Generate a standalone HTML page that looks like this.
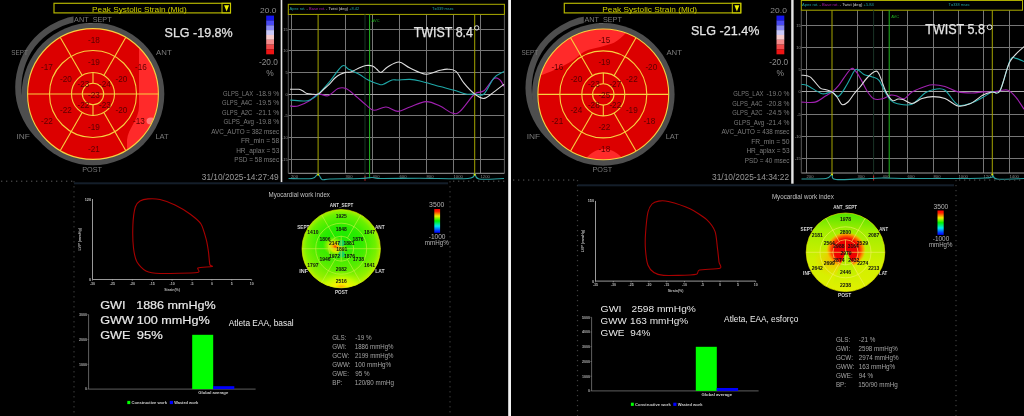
<!DOCTYPE html><html><head><meta charset="utf-8"><style>html,body{margin:0;padding:0;background:#000;width:1024px;height:416px;overflow:hidden}svg{display:block;will-change:transform}</style></head><body>
<svg width="1024" height="416" viewBox="0 0 1024 416" font-family="Liberation Sans, sans-serif">
<rect width="1024" height="416" fill="#000"/>
<rect x="54.0" y="3.3" width="176.5" height="9.6" fill="#000" stroke="#b4b400" stroke-width="1.2"/>
<rect x="222.0" y="3.3" width="8.5" height="9.6" fill="none" stroke="#c8c800" stroke-width="1"/>
<path d="M224.1,5.2 L229.1,5.2 L226.6,11.6Z" fill="#f0f000"/>
<text x="92.04" y="12.40" font-size="8.00" fill="#d0d000" font-weight="normal" textLength="94.68" lengthAdjust="spacingAndGlyphs" >Peak Systolic Strain (Mid)</text>
<path d="M101.63,19.61 A68.90,68.90 0 0 0 63.73,151.74" fill="none" stroke="#4e4e4e" stroke-width="6.20"/>
<circle cx="93.0" cy="94.0" r="71.3" fill="#4e4e4e"/>
<clipPath id="disc0"><circle cx="93.0" cy="94.0" r="65.4"/></clipPath>
<circle cx="93.0" cy="94.0" r="65.4" fill="#dc0000"/>
<g clip-path="url(#disc0)"><path d="M139,20 L139,106 C139,120 128,128 127,140 L127,170 L170,170 L170,20Z" fill="#ff2a2a"/><ellipse cx="151" cy="121" rx="4.5" ry="3.5" fill="#ff9a9a" opacity="0.75"/></g>
<circle cx="93.0" cy="94.0" r="65.4" fill="none" stroke="#f8d040" stroke-width="1.1"/>
<circle cx="93.0" cy="94.0" r="43.5" fill="none" stroke="#f8d040" stroke-width="1.1"/>
<circle cx="93.0" cy="94.0" r="21.5" fill="none" stroke="#f8d040" stroke-width="1.1"/>
<circle cx="93.0" cy="94.0" r="10.7" fill="none" stroke="#f8d040" stroke-width="1.1"/>
<line x1="27.6" y1="94.0" x2="158.4" y2="94.0" stroke="#f8d040" stroke-width="1.1"/>
<line x1="103.8" y1="75.4" x2="125.7" y2="37.4" stroke="#f8d040" stroke-width="1.1"/>
<line x1="82.2" y1="75.4" x2="60.3" y2="37.4" stroke="#f8d040" stroke-width="1.1"/>
<line x1="82.2" y1="112.6" x2="60.3" y2="150.6" stroke="#f8d040" stroke-width="1.1"/>
<line x1="103.8" y1="112.6" x2="125.7" y2="150.6" stroke="#f8d040" stroke-width="1.1"/>
<line x1="93.0" y1="72.5" x2="93.0" y2="83.3" stroke="#f8d040" stroke-width="1.1"/>
<line x1="93.0" y1="104.7" x2="93.0" y2="115.5" stroke="#f8d040" stroke-width="1.1"/>
<text x="94.0" y="43.0" font-size="8.20" fill="#5a0000" text-anchor="middle" font-weight="normal" >-18</text>
<text x="141.0" y="70.0" font-size="8.20" fill="#5a0000" text-anchor="middle" font-weight="normal" >-16</text>
<text x="139.0" y="124.0" font-size="8.20" fill="#5a0000" text-anchor="middle" font-weight="normal" >-13</text>
<text x="94.0" y="152.0" font-size="8.20" fill="#5a0000" text-anchor="middle" font-weight="normal" >-21</text>
<text x="47.0" y="124.0" font-size="8.20" fill="#5a0000" text-anchor="middle" font-weight="normal" >-22</text>
<text x="47.0" y="70.0" font-size="8.20" fill="#5a0000" text-anchor="middle" font-weight="normal" >-17</text>
<text x="94.0" y="65.0" font-size="8.20" fill="#5a0000" text-anchor="middle" font-weight="normal" >-19</text>
<text x="121.5" y="81.5" font-size="8.20" fill="#5a0000" text-anchor="middle" font-weight="normal" >-20</text>
<text x="121.5" y="113.0" font-size="8.20" fill="#5a0000" text-anchor="middle" font-weight="normal" >-20</text>
<text x="94.0" y="130.0" font-size="8.20" fill="#5a0000" text-anchor="middle" font-weight="normal" >-19</text>
<text x="66.0" y="113.0" font-size="8.20" fill="#5a0000" text-anchor="middle" font-weight="normal" >-22</text>
<text x="66.0" y="81.5" font-size="8.20" fill="#5a0000" text-anchor="middle" font-weight="normal" >-20</text>
<text x="83.5" y="86.5" font-size="8.20" fill="#5a0000" text-anchor="middle" font-weight="normal" >-23</text>
<text x="105.0" y="86.5" font-size="8.20" fill="#5a0000" text-anchor="middle" font-weight="normal" >-24</text>
<text x="105.0" y="108.0" font-size="8.20" fill="#5a0000" text-anchor="middle" font-weight="normal" >-23</text>
<text x="83.5" y="108.0" font-size="8.20" fill="#5a0000" text-anchor="middle" font-weight="normal" >-22</text>
<text x="94.0" y="97.5" font-size="8.20" fill="#5a0000" text-anchor="middle" font-weight="normal" >-23</text>
<rect x="73.5" y="15.2" width="38.5" height="7.6" fill="#000"/>
<text x="74.10" y="22.20" font-size="7.90" fill="#7a7a7a" font-weight="normal" textLength="37.47" lengthAdjust="spacingAndGlyphs" >ANT_SEPT</text>
<text x="11.31" y="55.30" font-size="7.90" fill="#7a7a7a" font-weight="normal" textLength="16.63" lengthAdjust="spacingAndGlyphs" >SEPT</text>
<text x="156.10" y="55.40" font-size="7.90" fill="#7a7a7a" font-weight="normal" textLength="15.56" lengthAdjust="spacingAndGlyphs" >ANT</text>
<text x="16.45" y="138.80" font-size="7.90" fill="#7a7a7a" font-weight="normal" textLength="13.39" lengthAdjust="spacingAndGlyphs" >INF</text>
<text x="155.40" y="138.90" font-size="7.90" fill="#7a7a7a" font-weight="normal" textLength="13.25" lengthAdjust="spacingAndGlyphs" >LAT</text>
<text x="82.22" y="171.90" font-size="7.90" fill="#7a7a7a" font-weight="normal" textLength="19.75" lengthAdjust="spacingAndGlyphs" >POST</text>
<text x="164.54" y="36.80" font-size="13.70" fill="#e4e4e4" font-weight="normal" textLength="68.17" lengthAdjust="spacingAndGlyphs" stroke="#e4e4e4" stroke-width="0.25">SLG -19.8%</text>
<text x="260.08" y="12.50" font-size="7.50" fill="#8c8c8c" font-weight="normal" textLength="16.48" lengthAdjust="spacingAndGlyphs" >20.0</text>
<rect x="266.2" y="15.60" width="7.8" height="4.90" fill="#1414f0"/>
<rect x="266.2" y="20.43" width="7.8" height="4.90" fill="#4a4af2"/>
<rect x="266.2" y="25.26" width="7.8" height="4.90" fill="#8a8af4"/>
<rect x="266.2" y="30.09" width="7.8" height="4.90" fill="#c8c8f8"/>
<rect x="266.2" y="34.92" width="7.8" height="4.90" fill="#f8cccc"/>
<rect x="266.2" y="39.75" width="7.8" height="4.90" fill="#f48a8a"/>
<rect x="266.2" y="44.58" width="7.8" height="4.90" fill="#f04a4a"/>
<rect x="266.2" y="49.41" width="7.8" height="4.90" fill="#ee1414"/>
<text x="258.93" y="64.90" font-size="9.00" fill="#8c8c8c" font-weight="normal" textLength="18.96" lengthAdjust="spacingAndGlyphs" >-20.0</text>
<text x="266.31" y="75.90" font-size="8.50" fill="#8c8c8c" font-weight="normal" textLength="7.48" lengthAdjust="spacingAndGlyphs" >%</text>
<text x="223.00" y="95.60" font-size="7.00" fill="#7a7a7a" font-weight="normal" textLength="30.24" lengthAdjust="spacingAndGlyphs" >GLPS_LAX</text>
<text x="256.20" y="95.60" font-size="7.00" fill="#7a7a7a" font-weight="normal" textLength="23.04" lengthAdjust="spacingAndGlyphs" >-18.9 %</text>
<text x="222.01" y="105.13" font-size="7.00" fill="#7a7a7a" font-weight="normal" textLength="30.33" lengthAdjust="spacingAndGlyphs" >GLPS_A4C</text>
<text x="256.20" y="105.13" font-size="7.00" fill="#7a7a7a" font-weight="normal" textLength="23.04" lengthAdjust="spacingAndGlyphs" >-19.5 %</text>
<text x="222.01" y="114.66" font-size="7.00" fill="#7a7a7a" font-weight="normal" textLength="30.33" lengthAdjust="spacingAndGlyphs" >GLPS_A2C</text>
<text x="256.20" y="114.66" font-size="7.00" fill="#7a7a7a" font-weight="normal" textLength="23.04" lengthAdjust="spacingAndGlyphs" >-21.1 %</text>
<text x="223.49" y="124.19" font-size="7.00" fill="#7a7a7a" font-weight="normal" textLength="30.51" lengthAdjust="spacingAndGlyphs" >GLPS_Avg</text>
<text x="256.20" y="124.19" font-size="7.00" fill="#7a7a7a" font-weight="normal" textLength="23.04" lengthAdjust="spacingAndGlyphs" >-19.8 %</text>
<text x="211.20" y="133.72" font-size="7.00" fill="#7a7a7a" font-weight="normal" textLength="67.95" lengthAdjust="spacingAndGlyphs" >AVC_AUTO = 382 msec</text>
<text x="240.97" y="143.25" font-size="7.00" fill="#7a7a7a" font-weight="normal" textLength="38.32" lengthAdjust="spacingAndGlyphs" >FR_min = 58</text>
<text x="236.18" y="152.78" font-size="7.00" fill="#7a7a7a" font-weight="normal" textLength="43.10" lengthAdjust="spacingAndGlyphs" >HR_aplax = 53</text>
<text x="234.29" y="162.31" font-size="7.00" fill="#7a7a7a" font-weight="normal" textLength="44.88" lengthAdjust="spacingAndGlyphs" >PSD = 58 msec</text>
<text x="201.77" y="179.90" font-size="9.00" fill="#989898" font-weight="normal" textLength="76.91" lengthAdjust="spacingAndGlyphs" >31/10/2025-14:27:49</text>
<rect x="280.7" y="0" width="1.6" height="182.3" fill="#e4e4e4"/>
<rect x="291" y="14.4" width="1" height="158.9" fill="#767676"/>
<rect x="345" y="14.4" width="1" height="158.9" fill="#767676"/>
<rect x="372" y="14.4" width="1" height="158.9" fill="#767676"/>
<rect x="399" y="14.4" width="1" height="158.9" fill="#767676"/>
<rect x="426" y="14.4" width="1" height="158.9" fill="#767676"/>
<rect x="453" y="14.4" width="1" height="158.9" fill="#767676"/>
<rect x="480" y="14.4" width="1" height="158.9" fill="#767676"/>
<rect x="288.3" y="29" width="216.1" height="1" fill="#767676"/>
<rect x="288.3" y="50" width="216.1" height="1" fill="#767676"/>
<rect x="288.3" y="72" width="216.1" height="1" fill="#767676"/>
<rect x="288.3" y="94" width="216.1" height="1" fill="#767676"/>
<rect x="288.3" y="115" width="216.1" height="1" fill="#767676"/>
<rect x="288.3" y="137" width="216.1" height="1" fill="#767676"/>
<rect x="288.3" y="159" width="216.1" height="1" fill="#767676"/>
<rect x="288.3" y="172.8" width="216.1" height="1" fill="#a0a0a0"/>
<rect x="288.3" y="94" width="216.1" height="1" fill="#a8a8a8"/>
<rect x="287.8" y="14.4" width="1" height="158.9" fill="#5a5a5a"/>
<rect x="503.9" y="14.4" width="1" height="158.9" fill="#5a5a5a"/>
<rect x="288.3" y="4.3" width="216.1" height="10.1" fill="#000" stroke="#acac00" stroke-width="1"/>
<text x="289.50" y="9.80" font-size="4.3" textLength="69.71" lengthAdjust="spacingAndGlyphs" font-family="Liberation Sans, sans-serif"><tspan fill="#20a0a0">Apex rot.</tspan><tspan fill="#808080"> - </tspan><tspan fill="#b020b0">Base rot.</tspan><tspan fill="#808080"> - </tspan><tspan fill="#d0d0d0">Twist (deg)</tspan><tspan fill="#20a0a0"> +8.42</tspan></text>
<text x="432.12" y="9.80" font-size="4.30" fill="#20a0a0" font-weight="normal" textLength="21.68" lengthAdjust="spacingAndGlyphs" >T=339 msec</text>
<rect x="364.5" y="14.4" width="1" height="163.9" fill="#1a3326"/>
<rect x="369.1" y="14.4" width="1" height="163.9" fill="#20b420"/>
<text x="371.6" y="22.4" font-size="4.00" fill="#20b020" text-anchor="start" font-weight="normal" >AVC</text>
<rect x="364.5" y="175.8" width="1" height="5" fill="#c02828"/>
<rect x="317.6" y="14.4" width="1" height="160.4" fill="#a4a400"/>
<rect x="474.2" y="14.4" width="1" height="160.4" fill="#a4a400"/>
<text x="287.8" y="30.5" font-size="4.00" fill="#909090" text-anchor="end" font-weight="normal" >15</text>
<text x="287.8" y="52.0" font-size="4.00" fill="#909090" text-anchor="end" font-weight="normal" >10</text>
<text x="287.8" y="74.0" font-size="4.00" fill="#909090" text-anchor="end" font-weight="normal" >5</text>
<text x="287.8" y="95.5" font-size="4.00" fill="#909090" text-anchor="end" font-weight="normal" >0</text>
<text x="287.8" y="117.0" font-size="4.00" fill="#909090" text-anchor="end" font-weight="normal" >-5</text>
<text x="287.8" y="139.0" font-size="4.00" fill="#909090" text-anchor="end" font-weight="normal" >-10</text>
<text x="287.8" y="160.5" font-size="4.00" fill="#909090" text-anchor="end" font-weight="normal" >-15</text>
<text x="291.0" y="177.9" font-size="4.20" fill="#8c8c8c" text-anchor="start" font-weight="normal" >200</text>
<text x="345.5" y="177.9" font-size="4.20" fill="#8c8c8c" text-anchor="start" font-weight="normal" >300</text>
<text x="372.5" y="177.9" font-size="4.20" fill="#8c8c8c" text-anchor="start" font-weight="normal" >400</text>
<text x="399.5" y="177.9" font-size="4.20" fill="#8c8c8c" text-anchor="start" font-weight="normal" >600</text>
<text x="426.5" y="177.9" font-size="4.20" fill="#8c8c8c" text-anchor="start" font-weight="normal" >800</text>
<text x="453.5" y="177.9" font-size="4.20" fill="#8c8c8c" text-anchor="start" font-weight="normal" >1000</text>
<text x="480.5" y="177.9" font-size="4.20" fill="#8c8c8c" text-anchor="start" font-weight="normal" >1200</text>
<path d="M290.0,106.0 C291.3,106.0 294.7,106.9 298.0,106.0 C301.3,105.1 306.7,102.5 310.0,100.5 C313.3,98.5 315.0,94.8 318.0,94.0 C321.0,93.2 324.7,96.7 328.0,95.8 C331.3,94.9 335.0,89.8 338.0,88.6 C341.0,87.4 343.0,87.3 346.0,88.6 C349.0,89.9 352.7,93.5 356.0,96.2 C359.3,98.9 363.0,102.6 366.0,104.9 C369.0,107.2 370.7,110.0 374.0,110.3 C377.3,110.6 382.0,106.8 386.0,107.0 C390.0,107.2 394.0,111.4 398.0,111.4 C402.0,111.4 405.3,108.6 410.0,107.0 C414.7,105.4 421.0,101.8 426.0,101.6 C431.0,101.4 435.7,104.1 440.0,106.0 C444.3,107.9 448.7,112.1 452.0,113.0 C455.3,113.9 456.2,114.6 460.0,111.4 C463.8,108.2 470.6,97.4 474.6,94.0 C478.6,90.6 480.8,93.4 484.0,90.8 C487.2,88.2 491.3,80.3 494.0,78.5 C496.7,76.7 498.3,78.7 500.0,80.0 C501.7,81.3 503.3,85.4 504.0,86.5" fill="none" stroke="#a020b0" stroke-width="1.1"/>
<path d="M290.3,100.1 C292.5,100.2 300.1,101.0 303.3,101.0 C306.6,101.0 307.3,101.3 309.8,100.1 C312.3,98.9 315.2,97.0 318.4,94.0 C321.6,91.0 325.2,86.9 329.2,82.2 C333.2,77.5 338.9,68.2 342.2,66.0 C345.4,63.8 345.8,67.8 348.7,69.2 C351.6,70.6 356.2,72.8 359.5,74.6 C362.8,76.4 364.9,78.4 368.2,80.0 C371.4,81.6 376.5,83.6 379.0,84.3 C381.5,85.0 381.1,85.0 383.3,84.3 C385.5,83.6 389.6,80.7 392.0,80.0 C394.4,79.3 395.0,80.1 398.0,80.0 C401.0,79.9 406.3,79.2 410.0,79.4 C413.7,79.6 415.0,79.8 420.0,81.0 C425.0,82.2 434.0,84.9 440.0,86.5 C446.0,88.1 451.7,89.5 456.0,90.8 C460.3,92.0 462.9,93.5 466.0,94.0 C469.1,94.5 471.6,94.0 474.6,94.0 C477.6,94.0 480.8,96.7 484.0,94.0 C487.2,91.3 490.7,81.6 494.0,77.8 C497.3,74.0 502.3,72.5 504.0,71.4" fill="none" stroke="#1ea8a8" stroke-width="1.1"/>
<path d="M290.0,89.3 C291.5,89.3 296.8,89.0 299.0,89.3 C301.2,89.6 301.7,90.3 303.0,91.0 C304.3,91.7 305.5,93.1 307.0,93.6 C308.5,94.1 310.1,94.1 312.0,94.2 C313.9,94.3 316.4,94.9 318.4,94.0 C320.4,93.1 322.2,90.6 324.0,89.0 C325.8,87.4 327.4,86.1 329.2,84.3 C331.0,82.5 333.2,79.6 335.0,78.0 C336.8,76.4 338.2,75.5 340.0,74.6 C341.8,73.7 343.7,72.8 345.5,72.4 C347.3,72.0 348.6,72.8 350.9,72.0 C353.2,71.2 357.0,68.8 359.5,67.7 C362.0,66.6 363.8,65.8 366.0,65.5 C368.2,65.2 370.7,65.4 372.5,66.0 C374.3,66.6 375.4,68.1 376.8,69.2 C378.2,70.3 379.3,72.8 381.1,72.4 C382.9,72.0 384.6,68.7 387.6,67.0 C390.6,65.3 395.3,61.8 399.0,62.0 C402.7,62.2 405.5,66.0 410.0,68.0 C414.5,70.0 421.0,73.8 426.0,74.2 C431.0,74.6 436.3,71.1 440.0,70.3 C443.7,69.5 445.3,69.0 448.0,69.2 C450.7,69.4 453.3,69.1 456.0,71.4 C458.7,73.7 460.9,79.4 464.0,83.2 C467.1,87.0 471.3,91.5 474.6,94.0 C477.9,96.5 480.8,98.8 484.0,98.4 C487.2,98.1 490.7,94.2 494.0,91.9 C497.3,89.6 502.3,85.6 504.0,84.3" fill="none" stroke="#dedede" stroke-width="1.1"/>
<path d="M288.5,178.5 C292.4,178.5 307.1,179.2 312.0,178.5 C316.9,177.8 316.3,173.8 318.0,174.0 C319.7,174.2 320.0,178.7 322.0,179.5 C324.0,180.3 323.7,179.2 330.0,179.0 C336.3,178.8 353.0,178.8 360.0,178.5 C367.0,178.2 368.7,177.5 372.0,177.5 C375.3,177.5 372.0,178.4 380.0,178.5 C388.0,178.6 405.3,178.3 420.0,178.3 C434.7,178.3 458.9,179.2 468.0,178.5 C477.1,177.8 472.9,173.9 474.7,174.0 C476.5,174.1 474.1,178.2 479.0,179.0 C483.9,179.8 499.8,178.6 504.0,178.5" fill="none" stroke="#2aa0a0" stroke-width="1.1"/>
<circle cx="318.1" cy="174.8" r="1" fill="#e0e000"/>
<circle cx="474.7" cy="174.8" r="1" fill="#e0e000"/>
<text x="413.75" y="36.50" font-size="14.00" fill="#e4e4e4" font-weight="normal" textLength="59.23" lengthAdjust="spacingAndGlyphs" stroke="#e4e4e4" stroke-width="0.25">TWIST 8.4</text>
<circle cx="476.7" cy="27.9" r="2.2" fill="none" stroke="#e4e4e4" stroke-width="1"/>
<rect x="564.3" y="3.3" width="176.5" height="9.6" fill="#000" stroke="#b4b400" stroke-width="1.2"/>
<rect x="732.3" y="3.3" width="8.5" height="9.6" fill="none" stroke="#c8c800" stroke-width="1"/>
<path d="M734.4,5.2 L739.4,5.2 L736.9,11.6Z" fill="#f0f000"/>
<text x="602.34" y="12.40" font-size="8.00" fill="#d0d000" font-weight="normal" textLength="94.68" lengthAdjust="spacingAndGlyphs" >Peak Systolic Strain (Mid)</text>
<path d="M611.93,20.01 A68.90,68.90 0 0 0 574.03,152.14" fill="none" stroke="#4e4e4e" stroke-width="6.20"/>
<circle cx="603.3" cy="94.4" r="71.3" fill="#4e4e4e"/>
<clipPath id="disc510"><circle cx="603.3" cy="94.4" r="65.4"/></clipPath>
<circle cx="603.3" cy="94.4" r="65.4" fill="#dc0000"/>
<g clip-path="url(#disc510)"><path d="M530,80 L540,75.5 C548,73 562,67 572,61 C578,57 582,52 588,50 C595,48 605,46 614,42.7 C619,40 622,37 626,33 L645,15 L645,0 L520,0Z" fill="#ff2a2a"/><path d="M583,162 C590,153 596,149 604,149 C612,149 619,153 625,162Z" fill="#ff2a2a"/></g>
<circle cx="603.3" cy="94.4" r="65.4" fill="none" stroke="#f8d040" stroke-width="1.1"/>
<circle cx="603.3" cy="94.4" r="43.5" fill="none" stroke="#f8d040" stroke-width="1.1"/>
<circle cx="603.3" cy="94.4" r="21.5" fill="none" stroke="#f8d040" stroke-width="1.1"/>
<circle cx="603.3" cy="94.4" r="10.7" fill="none" stroke="#f8d040" stroke-width="1.1"/>
<line x1="537.9" y1="94.4" x2="668.7" y2="94.4" stroke="#f8d040" stroke-width="1.1"/>
<line x1="614.0" y1="75.8" x2="636.0" y2="37.8" stroke="#f8d040" stroke-width="1.1"/>
<line x1="592.5" y1="75.8" x2="570.6" y2="37.8" stroke="#f8d040" stroke-width="1.1"/>
<line x1="592.5" y1="113.0" x2="570.6" y2="151.0" stroke="#f8d040" stroke-width="1.1"/>
<line x1="614.0" y1="113.0" x2="636.0" y2="151.0" stroke="#f8d040" stroke-width="1.1"/>
<line x1="603.3" y1="72.9" x2="603.3" y2="83.7" stroke="#f8d040" stroke-width="1.1"/>
<line x1="603.3" y1="105.1" x2="603.3" y2="115.9" stroke="#f8d040" stroke-width="1.1"/>
<text x="604.3" y="43.4" font-size="8.20" fill="#5a0000" text-anchor="middle" font-weight="normal" >-15</text>
<text x="651.3" y="70.4" font-size="8.20" fill="#5a0000" text-anchor="middle" font-weight="normal" >-20</text>
<text x="649.3" y="124.4" font-size="8.20" fill="#5a0000" text-anchor="middle" font-weight="normal" >-18</text>
<text x="604.3" y="152.4" font-size="8.20" fill="#5a0000" text-anchor="middle" font-weight="normal" >-18</text>
<text x="557.3" y="124.4" font-size="8.20" fill="#5a0000" text-anchor="middle" font-weight="normal" >-21</text>
<text x="557.3" y="70.4" font-size="8.20" fill="#5a0000" text-anchor="middle" font-weight="normal" >-16</text>
<text x="604.3" y="65.4" font-size="8.20" fill="#5a0000" text-anchor="middle" font-weight="normal" >-19</text>
<text x="631.8" y="81.9" font-size="8.20" fill="#5a0000" text-anchor="middle" font-weight="normal" >-22</text>
<text x="631.8" y="113.4" font-size="8.20" fill="#5a0000" text-anchor="middle" font-weight="normal" >-19</text>
<text x="604.3" y="130.4" font-size="8.20" fill="#5a0000" text-anchor="middle" font-weight="normal" >-22</text>
<text x="576.3" y="113.4" font-size="8.20" fill="#5a0000" text-anchor="middle" font-weight="normal" >-24</text>
<text x="576.3" y="81.9" font-size="8.20" fill="#5a0000" text-anchor="middle" font-weight="normal" >-20</text>
<text x="593.8" y="86.9" font-size="8.20" fill="#5a0000" text-anchor="middle" font-weight="normal" >-23</text>
<text x="615.3" y="86.9" font-size="8.20" fill="#5a0000" text-anchor="middle" font-weight="normal" >-27</text>
<text x="615.3" y="108.4" font-size="8.20" fill="#5a0000" text-anchor="middle" font-weight="normal" >-22</text>
<text x="593.8" y="108.4" font-size="8.20" fill="#5a0000" text-anchor="middle" font-weight="normal" >-28</text>
<text x="604.3" y="97.9" font-size="8.20" fill="#5a0000" text-anchor="middle" font-weight="normal" >-25</text>
<rect x="583.8" y="15.2" width="38.5" height="7.6" fill="#000"/>
<text x="584.40" y="22.20" font-size="7.90" fill="#7a7a7a" font-weight="normal" textLength="37.47" lengthAdjust="spacingAndGlyphs" >ANT_SEPT</text>
<text x="521.61" y="55.30" font-size="7.90" fill="#7a7a7a" font-weight="normal" textLength="16.63" lengthAdjust="spacingAndGlyphs" >SEPT</text>
<text x="666.40" y="55.40" font-size="7.90" fill="#7a7a7a" font-weight="normal" textLength="15.56" lengthAdjust="spacingAndGlyphs" >ANT</text>
<text x="526.75" y="138.80" font-size="7.90" fill="#7a7a7a" font-weight="normal" textLength="13.39" lengthAdjust="spacingAndGlyphs" >INF</text>
<text x="665.70" y="138.90" font-size="7.90" fill="#7a7a7a" font-weight="normal" textLength="13.25" lengthAdjust="spacingAndGlyphs" >LAT</text>
<text x="592.52" y="171.90" font-size="7.90" fill="#7a7a7a" font-weight="normal" textLength="19.75" lengthAdjust="spacingAndGlyphs" >POST</text>
<text x="690.93" y="34.80" font-size="13.70" fill="#e4e4e4" font-weight="normal" textLength="68.47" lengthAdjust="spacingAndGlyphs" stroke="#e4e4e4" stroke-width="0.25">SLG -21.4%</text>
<text x="770.38" y="12.50" font-size="7.50" fill="#8c8c8c" font-weight="normal" textLength="16.48" lengthAdjust="spacingAndGlyphs" >20.0</text>
<rect x="776.5" y="15.60" width="7.8" height="4.90" fill="#1414f0"/>
<rect x="776.5" y="20.43" width="7.8" height="4.90" fill="#4a4af2"/>
<rect x="776.5" y="25.26" width="7.8" height="4.90" fill="#8a8af4"/>
<rect x="776.5" y="30.09" width="7.8" height="4.90" fill="#c8c8f8"/>
<rect x="776.5" y="34.92" width="7.8" height="4.90" fill="#f8cccc"/>
<rect x="776.5" y="39.75" width="7.8" height="4.90" fill="#f48a8a"/>
<rect x="776.5" y="44.58" width="7.8" height="4.90" fill="#f04a4a"/>
<rect x="776.5" y="49.41" width="7.8" height="4.90" fill="#ee1414"/>
<text x="769.23" y="64.90" font-size="9.00" fill="#8c8c8c" font-weight="normal" textLength="18.96" lengthAdjust="spacingAndGlyphs" >-20.0</text>
<text x="776.61" y="75.90" font-size="8.50" fill="#8c8c8c" font-weight="normal" textLength="7.48" lengthAdjust="spacingAndGlyphs" >%</text>
<text x="733.30" y="96.00" font-size="7.00" fill="#7a7a7a" font-weight="normal" textLength="30.24" lengthAdjust="spacingAndGlyphs" >GLPS_LAX</text>
<text x="766.50" y="96.00" font-size="7.00" fill="#7a7a7a" font-weight="normal" textLength="23.04" lengthAdjust="spacingAndGlyphs" >-19.0 %</text>
<text x="732.21" y="105.53" font-size="7.00" fill="#7a7a7a" font-weight="normal" textLength="30.33" lengthAdjust="spacingAndGlyphs" >GLPS_A4C</text>
<text x="766.50" y="105.53" font-size="7.00" fill="#7a7a7a" font-weight="normal" textLength="23.04" lengthAdjust="spacingAndGlyphs" >-20.8 %</text>
<text x="732.21" y="115.06" font-size="7.00" fill="#7a7a7a" font-weight="normal" textLength="30.33" lengthAdjust="spacingAndGlyphs" >GLPS_A2C</text>
<text x="766.50" y="115.06" font-size="7.00" fill="#7a7a7a" font-weight="normal" textLength="23.04" lengthAdjust="spacingAndGlyphs" >-24.5 %</text>
<text x="733.79" y="124.59" font-size="7.00" fill="#7a7a7a" font-weight="normal" textLength="30.51" lengthAdjust="spacingAndGlyphs" >GLPS_Avg</text>
<text x="766.50" y="124.59" font-size="7.00" fill="#7a7a7a" font-weight="normal" textLength="23.04" lengthAdjust="spacingAndGlyphs" >-21.4 %</text>
<text x="721.60" y="134.12" font-size="7.00" fill="#7a7a7a" font-weight="normal" textLength="67.85" lengthAdjust="spacingAndGlyphs" >AVC_AUTO = 438 msec</text>
<text x="751.17" y="143.65" font-size="7.00" fill="#7a7a7a" font-weight="normal" textLength="38.38" lengthAdjust="spacingAndGlyphs" >FR_min = 50</text>
<text x="746.38" y="153.18" font-size="7.00" fill="#7a7a7a" font-weight="normal" textLength="43.20" lengthAdjust="spacingAndGlyphs" >HR_aplax = 53</text>
<text x="744.69" y="162.71" font-size="7.00" fill="#7a7a7a" font-weight="normal" textLength="44.78" lengthAdjust="spacingAndGlyphs" >PSD = 40 msec</text>
<text x="712.07" y="179.90" font-size="9.00" fill="#989898" font-weight="normal" textLength="76.96" lengthAdjust="spacingAndGlyphs" >31/10/2025-14:34:22</text>
<rect x="791.2" y="0" width="2.4" height="183.7" fill="#e4e4e4"/>
<rect x="806" y="10.2" width="1" height="162.8" fill="#767676"/>
<rect x="857" y="10.2" width="1" height="162.8" fill="#767676"/>
<rect x="882" y="10.2" width="1" height="162.8" fill="#767676"/>
<rect x="907" y="10.2" width="1" height="162.8" fill="#767676"/>
<rect x="933" y="10.2" width="1" height="162.8" fill="#767676"/>
<rect x="958" y="10.2" width="1" height="162.8" fill="#767676"/>
<rect x="983" y="10.2" width="1" height="162.8" fill="#767676"/>
<rect x="1009" y="10.2" width="1" height="162.8" fill="#767676"/>
<rect x="801.3" y="25" width="222.7" height="1" fill="#767676"/>
<rect x="801.3" y="47" width="222.7" height="1" fill="#767676"/>
<rect x="801.3" y="69" width="222.7" height="1" fill="#767676"/>
<rect x="801.3" y="91" width="222.7" height="1" fill="#767676"/>
<rect x="801.3" y="114" width="222.7" height="1" fill="#767676"/>
<rect x="801.3" y="136" width="222.7" height="1" fill="#767676"/>
<rect x="801.3" y="158" width="222.7" height="1" fill="#767676"/>
<rect x="801.3" y="172.5" width="222.7" height="1" fill="#a0a0a0"/>
<rect x="801.3" y="91" width="222.7" height="1" fill="#a8a8a8"/>
<rect x="800.8" y="10.2" width="1" height="162.8" fill="#5a5a5a"/>
<rect x="801.3" y="0.5" width="221.2" height="9.7" fill="#000" stroke="#acac00" stroke-width="1"/>
<text x="801.90" y="5.60" font-size="4.3" textLength="72.03" lengthAdjust="spacingAndGlyphs" font-family="Liberation Sans, sans-serif"><tspan fill="#20a0a0">Apex rot.</tspan><tspan fill="#808080"> - </tspan><tspan fill="#b020b0">Base rot.</tspan><tspan fill="#808080"> - </tspan><tspan fill="#d0d0d0">Twist (deg)</tspan><tspan fill="#20a0a0"> +5.84</tspan></text>
<text x="948.62" y="5.60" font-size="4.30" fill="#20a0a0" font-weight="normal" textLength="21.27" lengthAdjust="spacingAndGlyphs" >T=338 msec</text>
<rect x="873.1" y="10.2" width="1" height="167.8" fill="#1a3326"/>
<rect x="888.7" y="10.2" width="1" height="167.8" fill="#20b420"/>
<text x="891.2" y="18.2" font-size="4.00" fill="#20b020" text-anchor="start" font-weight="normal" >AVC</text>
<rect x="873.1" y="175.5" width="1" height="5" fill="#c02828"/>
<rect x="831.5" y="10.2" width="1" height="164.3" fill="#a4a400"/>
<rect x="991.8" y="10.2" width="1" height="164.3" fill="#a4a400"/>
<text x="800.8" y="27.0" font-size="4.00" fill="#909090" text-anchor="end" font-weight="normal" >15</text>
<text x="800.8" y="49.0" font-size="4.00" fill="#909090" text-anchor="end" font-weight="normal" >10</text>
<text x="800.8" y="71.0" font-size="4.00" fill="#909090" text-anchor="end" font-weight="normal" >5</text>
<text x="800.8" y="93.0" font-size="4.00" fill="#909090" text-anchor="end" font-weight="normal" >0</text>
<text x="800.8" y="116.0" font-size="4.00" fill="#909090" text-anchor="end" font-weight="normal" >-5</text>
<text x="800.8" y="138.0" font-size="4.00" fill="#909090" text-anchor="end" font-weight="normal" >-10</text>
<text x="800.8" y="160.0" font-size="4.00" fill="#909090" text-anchor="end" font-weight="normal" >-15</text>
<text x="806.5" y="177.6" font-size="4.20" fill="#8c8c8c" text-anchor="start" font-weight="normal" >200</text>
<text x="857.5" y="177.6" font-size="4.20" fill="#8c8c8c" text-anchor="start" font-weight="normal" >300</text>
<text x="882.5" y="177.6" font-size="4.20" fill="#8c8c8c" text-anchor="start" font-weight="normal" >400</text>
<text x="907.5" y="177.6" font-size="4.20" fill="#8c8c8c" text-anchor="start" font-weight="normal" >600</text>
<text x="933.5" y="177.6" font-size="4.20" fill="#8c8c8c" text-anchor="start" font-weight="normal" >800</text>
<text x="958.5" y="177.6" font-size="4.20" fill="#8c8c8c" text-anchor="start" font-weight="normal" >1000</text>
<text x="983.5" y="177.6" font-size="4.20" fill="#8c8c8c" text-anchor="start" font-weight="normal" >1200</text>
<text x="1009.5" y="177.6" font-size="4.20" fill="#8c8c8c" text-anchor="start" font-weight="normal" >1400</text>
<path d="M801.5,102.1 C803.8,102.1 811.4,102.9 815.1,102.1 C818.9,101.2 821.2,98.7 824.0,97.0 C826.8,95.3 829.5,94.0 832.0,92.0 C834.5,90.0 835.6,89.1 838.7,85.3 C841.8,81.5 847.6,71.7 850.4,69.3 C853.2,66.9 853.8,69.5 855.5,71.0 C857.2,72.5 858.5,75.2 860.5,78.6 C862.5,82.0 865.0,87.8 867.2,91.2 C869.4,94.6 871.4,97.5 873.9,98.8 C876.4,100.1 879.6,99.4 882.4,98.8 C885.2,98.2 888.3,95.5 890.8,95.1 C893.3,94.7 895.3,95.7 897.5,96.3 C899.7,96.9 901.8,99.5 904.2,98.8 C906.6,98.1 908.5,94.1 912.0,92.1 C915.5,90.0 921.5,87.7 925.0,86.5 C928.5,85.3 929.7,84.8 933.0,84.8 C936.3,84.8 940.8,85.3 945.0,86.5 C949.2,87.7 953.5,90.8 958.0,91.9 C962.5,93.0 967.8,93.0 972.0,93.0 C976.2,93.0 979.7,92.1 983.0,91.9 C986.3,91.7 989.2,92.2 992.0,92.0 C994.8,91.8 997.3,91.1 1000.0,90.8 C1002.7,90.5 1005.3,89.1 1008.0,90.2 C1010.7,91.3 1013.3,94.1 1016.0,97.3 C1018.7,100.5 1022.7,107.2 1024.0,109.2" fill="none" stroke="#a020b0" stroke-width="1.1"/>
<path d="M801.5,84.5 C802.4,84.6 803.6,83.9 806.7,85.3 C809.8,86.7 817.1,91.5 820.2,92.9 C823.3,94.3 823.2,93.9 825.2,93.7 C827.2,93.5 829.8,91.6 832.0,92.0 C834.2,92.4 836.2,97.5 838.7,96.2 C841.2,95.0 844.5,88.6 847.0,84.5 C849.5,80.4 852.1,74.3 853.8,71.8 C855.5,69.3 855.4,68.9 857.1,69.3 C858.8,69.7 861.4,73.1 863.9,74.4 C866.4,75.7 869.8,75.9 872.3,76.9 C874.8,77.9 876.8,77.6 879.0,80.3 C881.2,83.0 883.7,89.6 885.7,92.9 C887.7,96.2 888.8,98.6 890.8,100.4 C892.8,102.2 894.0,103.2 897.5,103.8 C901.0,104.4 907.4,106.0 912.0,104.2 C916.6,102.4 921.2,95.5 925.0,93.0 C928.8,90.5 931.7,89.8 935.0,89.3 C938.3,88.8 941.2,87.6 945.0,90.2 C948.8,92.8 953.5,102.8 958.0,104.9 C962.5,107.0 967.8,104.0 972.0,102.7 C976.2,101.4 979.7,99.1 983.0,97.3 C986.3,95.5 989.2,93.1 992.0,92.0 C994.8,90.9 997.0,96.0 1000.0,90.8 C1003.0,85.5 1007.3,65.9 1010.0,60.5 C1012.7,55.1 1013.7,58.2 1016.0,58.4 C1018.3,58.6 1022.7,61.1 1024.0,61.6" fill="none" stroke="#1ea8a8" stroke-width="1.1"/>
<path d="M801.5,75.2 C802.9,75.5 806.9,74.8 810.0,76.9 C813.1,79.0 817.5,85.7 820.0,87.8 C822.5,89.9 823.2,88.8 825.2,89.5 C827.2,90.2 830.0,90.8 832.0,92.0 C834.0,93.2 835.3,94.9 837.0,97.0 C838.7,99.1 840.2,103.8 842.0,104.6 C843.8,105.4 846.0,103.8 848.0,102.0 C850.0,100.2 852.0,96.5 854.0,94.0 C856.0,91.5 857.8,89.7 860.0,87.0 C862.2,84.3 864.5,80.6 867.0,78.0 C869.5,75.4 872.8,72.2 874.8,71.5 C876.8,70.8 877.2,70.7 879.0,74.0 C880.8,77.3 883.5,86.8 885.7,91.2 C887.9,95.6 890.4,99.1 892.4,100.4 C894.4,101.7 896.2,99.2 898.0,99.0 C899.8,98.8 900.7,98.8 903.0,99.5 C905.3,100.2 908.8,103.7 912.0,103.5 C915.2,103.3 918.5,99.8 922.0,98.6 C925.5,97.4 929.2,96.6 933.0,96.6 C936.8,96.6 940.8,96.8 945.0,98.4 C949.2,100.0 953.8,105.1 958.0,106.0 C962.2,106.9 965.8,105.6 970.0,103.8 C974.2,102.0 979.3,97.1 983.0,95.1 C986.7,93.1 989.2,92.7 992.0,92.0 C994.8,91.3 997.0,95.9 1000.0,90.8 C1003.0,85.7 1006.0,69.0 1010.0,61.6 C1014.0,54.2 1021.7,49.0 1024.0,46.5" fill="none" stroke="#dedede" stroke-width="1.1"/>
<path d="M801.5,179.0 C805.6,178.9 820.9,179.2 826.0,178.5 C831.1,177.8 830.3,174.3 832.0,174.5 C833.7,174.7 829.7,178.8 836.0,179.5 C842.3,180.2 862.3,178.8 870.0,178.5 C877.7,178.2 873.7,178.0 882.0,178.0 C890.3,178.0 902.7,178.5 920.0,178.5 C937.3,178.5 974.0,178.7 986.0,178.0 C998.0,177.3 990.5,174.3 992.3,174.5 C994.1,174.7 991.7,178.3 997.0,179.0 C1002.3,179.7 1019.5,178.6 1024.0,178.5" fill="none" stroke="#2aa0a0" stroke-width="1.1"/>
<circle cx="832.0" cy="174.5" r="1" fill="#e0e000"/>
<circle cx="992.3" cy="174.5" r="1" fill="#e0e000"/>
<text x="925.25" y="34.30" font-size="14.00" fill="#e4e4e4" font-weight="normal" textLength="59.76" lengthAdjust="spacingAndGlyphs" stroke="#e4e4e4" stroke-width="0.25">TWIST 5.8</text>
<circle cx="989.6" cy="27.2" r="2.4" fill="none" stroke="#e4e4e4" stroke-width="1"/>
<rect x="508.2" y="0" width="2.8" height="416" fill="#f2f2f2"/>
<rect x="1.0" y="180.6" width="1.3" height="1.3" fill="#464646"/><rect x="6.0" y="180.6" width="1.3" height="1.3" fill="#464646"/><rect x="11.0" y="180.6" width="1.3" height="1.3" fill="#464646"/><rect x="16.0" y="180.6" width="1.3" height="1.3" fill="#464646"/><rect x="21.0" y="180.6" width="1.3" height="1.3" fill="#464646"/><rect x="26.0" y="180.6" width="1.3" height="1.3" fill="#464646"/><rect x="31.0" y="180.6" width="1.3" height="1.3" fill="#464646"/><rect x="36.0" y="180.6" width="1.3" height="1.3" fill="#464646"/><rect x="41.0" y="180.6" width="1.3" height="1.3" fill="#464646"/><rect x="46.0" y="180.6" width="1.3" height="1.3" fill="#464646"/><rect x="51.0" y="180.6" width="1.3" height="1.3" fill="#464646"/><rect x="56.0" y="180.6" width="1.3" height="1.3" fill="#464646"/><rect x="61.0" y="180.6" width="1.3" height="1.3" fill="#464646"/><rect x="66.0" y="180.6" width="1.3" height="1.3" fill="#464646"/><rect x="71.0" y="180.6" width="1.3" height="1.3" fill="#464646"/><rect x="453.0" y="180.6" width="1.3" height="1.3" fill="#464646"/><rect x="458.0" y="180.6" width="1.3" height="1.3" fill="#464646"/><rect x="463.0" y="180.6" width="1.3" height="1.3" fill="#464646"/><rect x="468.0" y="180.6" width="1.3" height="1.3" fill="#464646"/><rect x="473.0" y="180.6" width="1.3" height="1.3" fill="#464646"/><rect x="478.0" y="180.6" width="1.3" height="1.3" fill="#464646"/><rect x="483.0" y="180.6" width="1.3" height="1.3" fill="#464646"/><rect x="488.0" y="180.6" width="1.3" height="1.3" fill="#464646"/><rect x="493.0" y="180.6" width="1.3" height="1.3" fill="#464646"/><rect x="498.0" y="180.6" width="1.3" height="1.3" fill="#464646"/><rect x="503.0" y="180.6" width="1.3" height="1.3" fill="#464646"/><rect x="73.4" y="181.2" width="1.2" height="1.2" fill="#3e3e3e"/><rect x="449.4" y="181.2" width="1.2" height="1.2" fill="#3e3e3e"/><rect x="73.4" y="186.2" width="1.2" height="1.2" fill="#3e3e3e"/><rect x="449.4" y="186.2" width="1.2" height="1.2" fill="#3e3e3e"/><rect x="73.4" y="191.2" width="1.2" height="1.2" fill="#3e3e3e"/><rect x="449.4" y="191.2" width="1.2" height="1.2" fill="#3e3e3e"/><rect x="73.4" y="196.2" width="1.2" height="1.2" fill="#3e3e3e"/><rect x="449.4" y="196.2" width="1.2" height="1.2" fill="#3e3e3e"/><rect x="73.4" y="201.2" width="1.2" height="1.2" fill="#3e3e3e"/><rect x="449.4" y="201.2" width="1.2" height="1.2" fill="#3e3e3e"/><rect x="73.4" y="206.2" width="1.2" height="1.2" fill="#3e3e3e"/><rect x="449.4" y="206.2" width="1.2" height="1.2" fill="#3e3e3e"/><rect x="73.4" y="211.2" width="1.2" height="1.2" fill="#3e3e3e"/><rect x="449.4" y="211.2" width="1.2" height="1.2" fill="#3e3e3e"/><rect x="73.4" y="216.2" width="1.2" height="1.2" fill="#3e3e3e"/><rect x="449.4" y="216.2" width="1.2" height="1.2" fill="#3e3e3e"/><rect x="73.4" y="221.2" width="1.2" height="1.2" fill="#3e3e3e"/><rect x="449.4" y="221.2" width="1.2" height="1.2" fill="#3e3e3e"/><rect x="73.4" y="226.2" width="1.2" height="1.2" fill="#3e3e3e"/><rect x="449.4" y="226.2" width="1.2" height="1.2" fill="#3e3e3e"/><rect x="73.4" y="231.2" width="1.2" height="1.2" fill="#3e3e3e"/><rect x="449.4" y="231.2" width="1.2" height="1.2" fill="#3e3e3e"/><rect x="73.4" y="236.2" width="1.2" height="1.2" fill="#3e3e3e"/><rect x="449.4" y="236.2" width="1.2" height="1.2" fill="#3e3e3e"/><rect x="73.4" y="241.2" width="1.2" height="1.2" fill="#3e3e3e"/><rect x="449.4" y="241.2" width="1.2" height="1.2" fill="#3e3e3e"/><rect x="73.4" y="246.2" width="1.2" height="1.2" fill="#3e3e3e"/><rect x="449.4" y="246.2" width="1.2" height="1.2" fill="#3e3e3e"/><rect x="73.4" y="251.2" width="1.2" height="1.2" fill="#3e3e3e"/><rect x="449.4" y="251.2" width="1.2" height="1.2" fill="#3e3e3e"/><rect x="73.4" y="256.2" width="1.2" height="1.2" fill="#3e3e3e"/><rect x="449.4" y="256.2" width="1.2" height="1.2" fill="#3e3e3e"/><rect x="73.4" y="261.2" width="1.2" height="1.2" fill="#3e3e3e"/><rect x="449.4" y="261.2" width="1.2" height="1.2" fill="#3e3e3e"/><rect x="73.4" y="266.2" width="1.2" height="1.2" fill="#3e3e3e"/><rect x="449.4" y="266.2" width="1.2" height="1.2" fill="#3e3e3e"/><rect x="73.4" y="271.2" width="1.2" height="1.2" fill="#3e3e3e"/><rect x="449.4" y="271.2" width="1.2" height="1.2" fill="#3e3e3e"/><rect x="73.4" y="276.2" width="1.2" height="1.2" fill="#3e3e3e"/><rect x="449.4" y="276.2" width="1.2" height="1.2" fill="#3e3e3e"/><rect x="73.4" y="281.2" width="1.2" height="1.2" fill="#3e3e3e"/><rect x="449.4" y="281.2" width="1.2" height="1.2" fill="#3e3e3e"/><rect x="73.4" y="286.2" width="1.2" height="1.2" fill="#3e3e3e"/><rect x="449.4" y="286.2" width="1.2" height="1.2" fill="#3e3e3e"/><rect x="73.4" y="291.2" width="1.2" height="1.2" fill="#3e3e3e"/><rect x="449.4" y="291.2" width="1.2" height="1.2" fill="#3e3e3e"/><rect x="73.4" y="296.2" width="1.2" height="1.2" fill="#3e3e3e"/><rect x="449.4" y="296.2" width="1.2" height="1.2" fill="#3e3e3e"/><rect x="73.4" y="301.2" width="1.2" height="1.2" fill="#3e3e3e"/><rect x="449.4" y="301.2" width="1.2" height="1.2" fill="#3e3e3e"/><rect x="73.4" y="306.2" width="1.2" height="1.2" fill="#3e3e3e"/><rect x="449.4" y="306.2" width="1.2" height="1.2" fill="#3e3e3e"/><rect x="73.4" y="311.2" width="1.2" height="1.2" fill="#3e3e3e"/><rect x="449.4" y="311.2" width="1.2" height="1.2" fill="#3e3e3e"/><rect x="73.4" y="316.2" width="1.2" height="1.2" fill="#3e3e3e"/><rect x="449.4" y="316.2" width="1.2" height="1.2" fill="#3e3e3e"/><rect x="73.4" y="321.2" width="1.2" height="1.2" fill="#3e3e3e"/><rect x="449.4" y="321.2" width="1.2" height="1.2" fill="#3e3e3e"/><rect x="73.4" y="326.2" width="1.2" height="1.2" fill="#3e3e3e"/><rect x="449.4" y="326.2" width="1.2" height="1.2" fill="#3e3e3e"/><rect x="73.4" y="331.2" width="1.2" height="1.2" fill="#3e3e3e"/><rect x="449.4" y="331.2" width="1.2" height="1.2" fill="#3e3e3e"/><rect x="73.4" y="336.2" width="1.2" height="1.2" fill="#3e3e3e"/><rect x="449.4" y="336.2" width="1.2" height="1.2" fill="#3e3e3e"/><rect x="73.4" y="341.2" width="1.2" height="1.2" fill="#3e3e3e"/><rect x="449.4" y="341.2" width="1.2" height="1.2" fill="#3e3e3e"/><rect x="73.4" y="346.2" width="1.2" height="1.2" fill="#3e3e3e"/><rect x="449.4" y="346.2" width="1.2" height="1.2" fill="#3e3e3e"/><rect x="73.4" y="351.2" width="1.2" height="1.2" fill="#3e3e3e"/><rect x="449.4" y="351.2" width="1.2" height="1.2" fill="#3e3e3e"/><rect x="73.4" y="356.2" width="1.2" height="1.2" fill="#3e3e3e"/><rect x="449.4" y="356.2" width="1.2" height="1.2" fill="#3e3e3e"/><rect x="73.4" y="361.2" width="1.2" height="1.2" fill="#3e3e3e"/><rect x="449.4" y="361.2" width="1.2" height="1.2" fill="#3e3e3e"/><rect x="73.4" y="366.2" width="1.2" height="1.2" fill="#3e3e3e"/><rect x="449.4" y="366.2" width="1.2" height="1.2" fill="#3e3e3e"/><rect x="73.4" y="371.2" width="1.2" height="1.2" fill="#3e3e3e"/><rect x="449.4" y="371.2" width="1.2" height="1.2" fill="#3e3e3e"/><rect x="73.4" y="376.2" width="1.2" height="1.2" fill="#3e3e3e"/><rect x="449.4" y="376.2" width="1.2" height="1.2" fill="#3e3e3e"/><rect x="73.4" y="381.2" width="1.2" height="1.2" fill="#3e3e3e"/><rect x="449.4" y="381.2" width="1.2" height="1.2" fill="#3e3e3e"/><rect x="73.4" y="386.2" width="1.2" height="1.2" fill="#3e3e3e"/><rect x="449.4" y="386.2" width="1.2" height="1.2" fill="#3e3e3e"/><rect x="73.4" y="391.2" width="1.2" height="1.2" fill="#3e3e3e"/><rect x="449.4" y="391.2" width="1.2" height="1.2" fill="#3e3e3e"/><rect x="73.4" y="396.2" width="1.2" height="1.2" fill="#3e3e3e"/><rect x="449.4" y="396.2" width="1.2" height="1.2" fill="#3e3e3e"/><rect x="73.4" y="401.2" width="1.2" height="1.2" fill="#3e3e3e"/><rect x="449.4" y="401.2" width="1.2" height="1.2" fill="#3e3e3e"/><rect x="73.4" y="406.2" width="1.2" height="1.2" fill="#3e3e3e"/><rect x="449.4" y="406.2" width="1.2" height="1.2" fill="#3e3e3e"/><rect x="73.4" y="411.2" width="1.2" height="1.2" fill="#3e3e3e"/><rect x="449.4" y="411.2" width="1.2" height="1.2" fill="#3e3e3e"/>
<rect x="74.0" y="182.3" width="374.0" height="2" fill="#141e2a"/>
<line x1="92.5" y1="199.0" x2="92.5" y2="279.5" stroke="#c0c0c0" stroke-width="0.8"/>
<line x1="92.5" y1="279.5" x2="251.7" y2="279.5" stroke="#c0c0c0" stroke-width="0.8"/>
<text x="91.0" y="200.5" font-size="3.80" fill="#c0c0c0" text-anchor="end" font-weight="bold" >120</text>
<text x="91.0" y="281.0" font-size="3.80" fill="#c0c0c0" text-anchor="end" font-weight="bold" >0</text>
<text transform="translate(81.0,239.2) rotate(-90)" font-size="3.8" font-weight="bold" fill="#b8b8b8" text-anchor="middle" font-family="Liberation Sans, sans-serif">LVP (mmHg)</text>
<line x1="92.5" y1="279.5" x2="92.5" y2="280.7" stroke="#c0c0c0" stroke-width="0.6"/>
<text x="92.5" y="284.5" font-size="3.60" fill="#b8b8b8" text-anchor="middle" font-weight="bold" >-30</text>
<line x1="112.4" y1="279.5" x2="112.4" y2="280.7" stroke="#c0c0c0" stroke-width="0.6"/>
<text x="112.4" y="284.5" font-size="3.60" fill="#b8b8b8" text-anchor="middle" font-weight="bold" >-25</text>
<line x1="132.3" y1="279.5" x2="132.3" y2="280.7" stroke="#c0c0c0" stroke-width="0.6"/>
<text x="132.3" y="284.5" font-size="3.60" fill="#b8b8b8" text-anchor="middle" font-weight="bold" >-20</text>
<line x1="152.2" y1="279.5" x2="152.2" y2="280.7" stroke="#c0c0c0" stroke-width="0.6"/>
<text x="152.2" y="284.5" font-size="3.60" fill="#b8b8b8" text-anchor="middle" font-weight="bold" >-15</text>
<line x1="172.1" y1="279.5" x2="172.1" y2="280.7" stroke="#c0c0c0" stroke-width="0.6"/>
<text x="172.1" y="284.5" font-size="3.60" fill="#b8b8b8" text-anchor="middle" font-weight="bold" >-10</text>
<line x1="192.0" y1="279.5" x2="192.0" y2="280.7" stroke="#c0c0c0" stroke-width="0.6"/>
<text x="192.0" y="284.5" font-size="3.60" fill="#b8b8b8" text-anchor="middle" font-weight="bold" >-5</text>
<line x1="211.9" y1="279.5" x2="211.9" y2="280.7" stroke="#c0c0c0" stroke-width="0.6"/>
<text x="211.9" y="284.5" font-size="3.60" fill="#b8b8b8" text-anchor="middle" font-weight="bold" >0</text>
<line x1="231.8" y1="279.5" x2="231.8" y2="280.7" stroke="#c0c0c0" stroke-width="0.6"/>
<text x="231.8" y="284.5" font-size="3.60" fill="#b8b8b8" text-anchor="middle" font-weight="bold" >5</text>
<line x1="251.7" y1="279.5" x2="251.7" y2="280.7" stroke="#c0c0c0" stroke-width="0.6"/>
<text x="251.7" y="284.5" font-size="3.60" fill="#b8b8b8" text-anchor="middle" font-weight="bold" >10</text>
<text x="172.1" y="290.5" font-size="3.60" fill="#b8b8b8" text-anchor="middle" font-weight="bold" >Strain(%)</text>
<path d="M148.0,198.9 C150.3,198.7 156.8,198.8 160.0,199.5 C163.2,200.2 171.5,203.3 175.0,205.0 C178.5,206.7 187.0,211.8 190.0,214.0 C193.0,216.2 199.1,221.0 201.0,224.0 C202.9,227.0 205.3,236.0 206.2,239.3 C207.1,242.6 208.1,249.1 208.5,252.0 C208.9,254.9 209.4,262.8 209.8,264.5 C210.2,266.2 213.6,266.1 212.2,266.5 C210.8,266.9 199.7,267.3 198.0,268.0 C196.3,268.7 201.7,271.9 197.3,272.5 C192.9,273.1 166.0,273.7 160.0,273.5 C154.0,273.3 148.7,272.3 146.0,271.0 C143.3,269.7 138.5,264.7 137.0,262.0 C135.5,259.3 134.0,252.3 133.5,248.0 C133.0,243.7 132.7,229.8 132.9,225.0 C133.1,220.2 134.5,209.8 135.3,207.0 C136.1,204.2 138.5,201.9 140.0,201.0 C141.5,200.1 145.7,199.1 148.0,198.9Z" fill="none" stroke="#a80000" stroke-width="1.1"/>
<text x="268.50" y="196.60" font-size="6.70" fill="#c0c0c0" font-weight="normal" textLength="61.45" lengthAdjust="spacingAndGlyphs" >Myocardial work index</text>
<text x="329.69" y="207.40" font-size="5.60" fill="#d4d4d4" font-weight="bold" textLength="23.65" lengthAdjust="spacingAndGlyphs" >ANT_SEPT</text>
<text x="297.16" y="229.10" font-size="5.60" fill="#d4d4d4" font-weight="bold" textLength="12.20" lengthAdjust="spacingAndGlyphs" >SEPT</text>
<text x="374.88" y="229.10" font-size="5.60" fill="#d4d4d4" font-weight="bold" textLength="9.77" lengthAdjust="spacingAndGlyphs" >ANT</text>
<text x="299.34" y="272.90" font-size="5.60" fill="#d4d4d4" font-weight="bold" textLength="8.85" lengthAdjust="spacingAndGlyphs" >INF</text>
<text x="375.17" y="272.90" font-size="5.60" fill="#d4d4d4" font-weight="bold" textLength="9.48" lengthAdjust="spacingAndGlyphs" >LAT</text>
<text x="335.00" y="294.00" font-size="5.60" fill="#d4d4d4" font-weight="bold" textLength="12.66" lengthAdjust="spacingAndGlyphs" >POST</text>
<defs><radialGradient id="gb341" cx="0.5" cy="0.5" r="0.5"><stop offset="0" stop-color="#10e800"/><stop offset="0.55" stop-color="#28ec00"/><stop offset="0.88" stop-color="#68f000"/><stop offset="1" stop-color="#a8f000"/></radialGradient><radialGradient id="gb341y" cx="0.5" cy="0.5" r="0.5"><stop offset="0" stop-color="#ffa000" stop-opacity="1"/><stop offset="0.25" stop-color="#f8f000" stop-opacity="1"/><stop offset="0.6" stop-color="#d8ff00" stop-opacity="0.7"/><stop offset="1" stop-color="#a0ff00" stop-opacity="0"/></radialGradient><radialGradient id="gb341o" cx="0.5" cy="0.5" r="0.5"><stop offset="0" stop-color="#f04000" stop-opacity="1"/><stop offset="0.18" stop-color="#ffb000" stop-opacity="0.95"/><stop offset="0.45" stop-color="#f8f000" stop-opacity="0.8"/><stop offset="1" stop-color="#c0f000" stop-opacity="0"/></radialGradient></defs><circle cx="341.2" cy="248.7" r="39.2" fill="url(#gb341)"/><clipPath id="gb341c"><circle cx="341.2" cy="248.7" r="39.2"/></clipPath><g clip-path="url(#gb341c)"><linearGradient id="gb341l" x1="0" y1="0" x2="0" y2="1"><stop offset="0.35" stop-color="#e0f000" stop-opacity="0"/><stop offset="1" stop-color="#e8f000" stop-opacity="0.45"/></linearGradient><rect x="302.0" y="209.5" width="78.4" height="78.4" fill="url(#gb341l)"/><ellipse cx="341.2" cy="287.9" rx="26" ry="17" fill="url(#gb341y)"/><ellipse cx="335.2" cy="246.7" rx="13" ry="10" fill="url(#gb341o)" transform="rotate(25 335.2 246.7)"/><circle cx="341.7" cy="243.2" r="3.2" fill="#10d070" opacity="0.85"/><circle cx="341.7" cy="254.2" r="3.2" fill="#10d070" opacity="0.85"/></g><circle cx="341.2" cy="248.7" r="39.2" fill="none" stroke="#d8f000" stroke-width="0.8" opacity="0.8"/><circle cx="341.2" cy="248.7" r="25.5" fill="none" stroke="#c8f040" stroke-width="0.7" opacity="0.9"/><circle cx="341.2" cy="248.7" r="12.5" fill="none" stroke="#c8f040" stroke-width="0.7" opacity="0.9"/><line x1="302.0" y1="248.7" x2="380.4" y2="248.7" stroke="#c8f040" stroke-width="0.7" opacity="0.9"/><line x1="347.5" y1="237.8" x2="360.8" y2="214.8" stroke="#c8f040" stroke-width="0.7" opacity="0.9"/><line x1="334.9" y1="237.8" x2="321.6" y2="214.8" stroke="#c8f040" stroke-width="0.7" opacity="0.9"/><line x1="334.9" y1="259.6" x2="321.6" y2="282.6" stroke="#c8f040" stroke-width="0.7" opacity="0.9"/><line x1="347.5" y1="259.6" x2="360.8" y2="282.6" stroke="#c8f040" stroke-width="0.7" opacity="0.9"/><line x1="341.2" y1="236.2" x2="341.2" y2="261.2" stroke="#c8f040" stroke-width="0.7" opacity="0.9"/><text x="341.2" y="217.6" font-size="5" font-weight="bold" fill="#101010" text-anchor="middle" font-family="Liberation Sans, sans-serif">1925</text><text x="369.5" y="233.7" font-size="5" font-weight="bold" fill="#101010" text-anchor="middle" font-family="Liberation Sans, sans-serif">1847</text><text x="369.5" y="266.7" font-size="5" font-weight="bold" fill="#101010" text-anchor="middle" font-family="Liberation Sans, sans-serif">1641</text><text x="341.2" y="283.0" font-size="5" font-weight="bold" fill="#101010" text-anchor="middle" font-family="Liberation Sans, sans-serif">2516</text><text x="312.9" y="266.7" font-size="5" font-weight="bold" fill="#101010" text-anchor="middle" font-family="Liberation Sans, sans-serif">1797</text><text x="312.9" y="233.7" font-size="5" font-weight="bold" fill="#101010" text-anchor="middle" font-family="Liberation Sans, sans-serif">1410</text><text x="341.2" y="230.8" font-size="5" font-weight="bold" fill="#101010" text-anchor="middle" font-family="Liberation Sans, sans-serif">1848</text><text x="358.1" y="240.9" font-size="5" font-weight="bold" fill="#101010" text-anchor="middle" font-family="Liberation Sans, sans-serif">1876</text><text x="358.4" y="260.9" font-size="5" font-weight="bold" fill="#101010" text-anchor="middle" font-family="Liberation Sans, sans-serif">1738</text><text x="341.2" y="270.5" font-size="5" font-weight="bold" fill="#101010" text-anchor="middle" font-family="Liberation Sans, sans-serif">2082</text><text x="325.0" y="260.9" font-size="5" font-weight="bold" fill="#101010" text-anchor="middle" font-family="Liberation Sans, sans-serif">1946</text><text x="325.0" y="240.9" font-size="5" font-weight="bold" fill="#101010" text-anchor="middle" font-family="Liberation Sans, sans-serif">1806</text><text x="334.6" y="244.5" font-size="5" font-weight="bold" fill="#101010" text-anchor="middle" font-family="Liberation Sans, sans-serif">2147</text><text x="349.0" y="244.5" font-size="5" font-weight="bold" fill="#101010" text-anchor="middle" font-family="Liberation Sans, sans-serif">1881</text><text x="349.5" y="258.2" font-size="5" font-weight="bold" fill="#101010" text-anchor="middle" font-family="Liberation Sans, sans-serif">1876</text><text x="334.6" y="258.2" font-size="5" font-weight="bold" fill="#101010" text-anchor="middle" font-family="Liberation Sans, sans-serif">1972</text><text x="341.8" y="251.3" font-size="5" font-weight="bold" fill="#101010" text-anchor="middle" font-family="Liberation Sans, sans-serif">1891</text>
<defs><linearGradient id="rb74" x1="0" y1="0" x2="0" y2="1"><stop offset="0" stop-color="#ff0000"/><stop offset="0.1" stop-color="#ff2000"/><stop offset="0.3" stop-color="#f0f000"/><stop offset="0.5" stop-color="#00f000"/><stop offset="0.72" stop-color="#00e8f0"/><stop offset="0.9" stop-color="#0040ff"/><stop offset="1" stop-color="#0000ff"/></linearGradient></defs>
<rect x="434.3" y="209.0" width="5.8" height="23.8" fill="url(#rb74)"/>
<text x="429.12" y="206.70" font-size="6.30" fill="#b4b4b4" font-weight="normal" textLength="15.31" lengthAdjust="spacingAndGlyphs" >3500</text>
<text x="428.70" y="238.90" font-size="6.30" fill="#b4b4b4" font-weight="normal" textLength="16.84" lengthAdjust="spacingAndGlyphs" >-1000</text>
<text x="424.79" y="245.40" font-size="6.30" fill="#b4b4b4" font-weight="normal" textLength="24.02" lengthAdjust="spacingAndGlyphs" >mmHg%</text>
<text x="100.16" y="308.50" font-size="11.80" fill="#e8e8e8" font-weight="normal" textLength="25.44" lengthAdjust="spacingAndGlyphs" stroke="#e8e8e8" stroke-width="0.2">GWI</text>
<text x="136.16" y="308.50" font-size="11.80" fill="#e8e8e8" font-weight="normal" textLength="79.49" lengthAdjust="spacingAndGlyphs" stroke="#e8e8e8" stroke-width="0.2">1886 mmHg%</text>
<text x="100.17" y="323.80" font-size="11.80" fill="#e8e8e8" font-weight="normal" textLength="33.60" lengthAdjust="spacingAndGlyphs" stroke="#e8e8e8" stroke-width="0.2">GWW</text>
<text x="136.75" y="323.80" font-size="11.80" fill="#e8e8e8" font-weight="normal" textLength="72.89" lengthAdjust="spacingAndGlyphs" stroke="#e8e8e8" stroke-width="0.2">100 mmHg%</text>
<text x="100.17" y="338.50" font-size="11.80" fill="#e8e8e8" font-weight="normal" textLength="30.29" lengthAdjust="spacingAndGlyphs" stroke="#e8e8e8" stroke-width="0.2">GWE</text>
<text x="136.72" y="338.50" font-size="11.80" fill="#e8e8e8" font-weight="normal" textLength="25.96" lengthAdjust="spacingAndGlyphs" stroke="#e8e8e8" stroke-width="0.2">95%</text>
<text x="228.70" y="325.80" font-size="8.60" fill="#ececec" font-weight="normal" textLength="64.96" lengthAdjust="spacingAndGlyphs" >Atleta EAA, basal</text>
<line x1="88.6" y1="314.6" x2="88.6" y2="389.1" stroke="#777777" stroke-width="0.8"/>
<line x1="88.6" y1="389.1" x2="255.6" y2="389.1" stroke="#777777" stroke-width="0.8"/>
<text x="87.1" y="390.4" font-size="3.60" fill="#b0b0b0" text-anchor="end" font-weight="bold" >0</text>
<line x1="87.4" y1="389.1" x2="88.6" y2="389.1" stroke="#909090" stroke-width="0.6"/>
<text x="87.1" y="365.6" font-size="3.60" fill="#b0b0b0" text-anchor="end" font-weight="bold" >1000</text>
<line x1="87.4" y1="364.3" x2="88.6" y2="364.3" stroke="#909090" stroke-width="0.6"/>
<text x="87.1" y="340.7" font-size="3.60" fill="#b0b0b0" text-anchor="end" font-weight="bold" >2000</text>
<line x1="87.4" y1="339.4" x2="88.6" y2="339.4" stroke="#909090" stroke-width="0.6"/>
<text x="87.1" y="315.9" font-size="3.60" fill="#b0b0b0" text-anchor="end" font-weight="bold" >3000</text>
<line x1="87.4" y1="314.6" x2="88.6" y2="314.6" stroke="#909090" stroke-width="0.6"/>
<rect x="192.2" y="334.8" width="21.0" height="54.3" fill="#00ff00"/>
<rect x="213.2" y="386.2" width="21.1" height="2.9" fill="#0000ff"/>
<text x="198.33" y="394.10" font-size="4.00" fill="#cfcfcf" font-weight="bold" textLength="29.91" lengthAdjust="spacingAndGlyphs" >Global average</text>
<rect x="127.3" y="400.9" width="3.0" height="3.2" fill="#00ff00"/>
<text x="131.54" y="404.20" font-size="4.00" fill="#cfcfcf" font-weight="bold" textLength="35.36" lengthAdjust="spacingAndGlyphs" >Constructive work</text>
<rect x="169.8" y="400.9" width="3.2" height="3.2" fill="#0000ff"/>
<text x="174.20" y="404.20" font-size="4.00" fill="#cfcfcf" font-weight="bold" textLength="24.10" lengthAdjust="spacingAndGlyphs" >Wasted work</text>
<text x="332.2" y="340.3" font-size="6.30" fill="#a4a4a4" text-anchor="start" font-weight="normal" >GLS:</text>
<text x="355.2" y="340.3" font-size="6.30" fill="#a4a4a4" text-anchor="start" font-weight="normal" >-19 %</text>
<text x="332.2" y="349.3" font-size="6.30" fill="#a4a4a4" text-anchor="start" font-weight="normal" >GWI:</text>
<text x="354.74" y="349.30" font-size="6.30" fill="#a4a4a4" font-weight="normal" textLength="38.78" lengthAdjust="spacingAndGlyphs" >1886 mmHg%</text>
<text x="332.2" y="358.3" font-size="6.30" fill="#a4a4a4" text-anchor="start" font-weight="normal" >GCW:</text>
<text x="354.90" y="358.30" font-size="6.30" fill="#a4a4a4" font-weight="normal" textLength="38.62" lengthAdjust="spacingAndGlyphs" >2199 mmHg%</text>
<text x="332.2" y="367.3" font-size="6.30" fill="#a4a4a4" text-anchor="start" font-weight="normal" >GWW:</text>
<text x="354.73" y="367.30" font-size="6.30" fill="#a4a4a4" font-weight="normal" textLength="36.29" lengthAdjust="spacingAndGlyphs" >100 mmHg%</text>
<text x="332.2" y="376.3" font-size="6.30" fill="#a4a4a4" text-anchor="start" font-weight="normal" >GWE:</text>
<text x="355.2" y="376.3" font-size="6.30" fill="#a4a4a4" text-anchor="start" font-weight="normal" >95 %</text>
<text x="332.2" y="385.3" font-size="6.30" fill="#a4a4a4" text-anchor="start" font-weight="normal" >BP:</text>
<text x="354.73" y="385.30" font-size="6.30" fill="#a4a4a4" font-weight="normal" textLength="39.18" lengthAdjust="spacingAndGlyphs" >120/80 mmHg</text>
<rect x="513.0" y="179.4" width="1.3" height="1.3" fill="#464646"/><rect x="518.0" y="179.4" width="1.3" height="1.3" fill="#464646"/><rect x="523.0" y="179.4" width="1.3" height="1.3" fill="#464646"/><rect x="528.0" y="179.4" width="1.3" height="1.3" fill="#464646"/><rect x="533.0" y="179.4" width="1.3" height="1.3" fill="#464646"/><rect x="538.0" y="179.4" width="1.3" height="1.3" fill="#464646"/><rect x="543.0" y="179.4" width="1.3" height="1.3" fill="#464646"/><rect x="548.0" y="179.4" width="1.3" height="1.3" fill="#464646"/><rect x="553.0" y="179.4" width="1.3" height="1.3" fill="#464646"/><rect x="558.0" y="179.4" width="1.3" height="1.3" fill="#464646"/><rect x="563.0" y="179.4" width="1.3" height="1.3" fill="#464646"/><rect x="568.0" y="179.4" width="1.3" height="1.3" fill="#464646"/><rect x="573.0" y="179.4" width="1.3" height="1.3" fill="#464646"/><rect x="959.0" y="179.4" width="1.3" height="1.3" fill="#464646"/><rect x="964.0" y="179.4" width="1.3" height="1.3" fill="#464646"/><rect x="969.0" y="179.4" width="1.3" height="1.3" fill="#464646"/><rect x="974.0" y="179.4" width="1.3" height="1.3" fill="#464646"/><rect x="979.0" y="179.4" width="1.3" height="1.3" fill="#464646"/><rect x="984.0" y="179.4" width="1.3" height="1.3" fill="#464646"/><rect x="989.0" y="179.4" width="1.3" height="1.3" fill="#464646"/><rect x="994.0" y="179.4" width="1.3" height="1.3" fill="#464646"/><rect x="999.0" y="179.4" width="1.3" height="1.3" fill="#464646"/><rect x="1004.0" y="179.4" width="1.3" height="1.3" fill="#464646"/><rect x="1009.0" y="179.4" width="1.3" height="1.3" fill="#464646"/><rect x="1014.0" y="179.4" width="1.3" height="1.3" fill="#464646"/><rect x="1019.0" y="179.4" width="1.3" height="1.3" fill="#464646"/><rect x="576.9" y="180.0" width="1.2" height="1.2" fill="#3e3e3e"/><rect x="955.4" y="180.0" width="1.2" height="1.2" fill="#3e3e3e"/><rect x="576.9" y="185.0" width="1.2" height="1.2" fill="#3e3e3e"/><rect x="955.4" y="185.0" width="1.2" height="1.2" fill="#3e3e3e"/><rect x="576.9" y="190.0" width="1.2" height="1.2" fill="#3e3e3e"/><rect x="955.4" y="190.0" width="1.2" height="1.2" fill="#3e3e3e"/><rect x="576.9" y="195.0" width="1.2" height="1.2" fill="#3e3e3e"/><rect x="955.4" y="195.0" width="1.2" height="1.2" fill="#3e3e3e"/><rect x="576.9" y="200.0" width="1.2" height="1.2" fill="#3e3e3e"/><rect x="955.4" y="200.0" width="1.2" height="1.2" fill="#3e3e3e"/><rect x="576.9" y="205.0" width="1.2" height="1.2" fill="#3e3e3e"/><rect x="955.4" y="205.0" width="1.2" height="1.2" fill="#3e3e3e"/><rect x="576.9" y="210.0" width="1.2" height="1.2" fill="#3e3e3e"/><rect x="955.4" y="210.0" width="1.2" height="1.2" fill="#3e3e3e"/><rect x="576.9" y="215.0" width="1.2" height="1.2" fill="#3e3e3e"/><rect x="955.4" y="215.0" width="1.2" height="1.2" fill="#3e3e3e"/><rect x="576.9" y="220.0" width="1.2" height="1.2" fill="#3e3e3e"/><rect x="955.4" y="220.0" width="1.2" height="1.2" fill="#3e3e3e"/><rect x="576.9" y="225.0" width="1.2" height="1.2" fill="#3e3e3e"/><rect x="955.4" y="225.0" width="1.2" height="1.2" fill="#3e3e3e"/><rect x="576.9" y="230.0" width="1.2" height="1.2" fill="#3e3e3e"/><rect x="955.4" y="230.0" width="1.2" height="1.2" fill="#3e3e3e"/><rect x="576.9" y="235.0" width="1.2" height="1.2" fill="#3e3e3e"/><rect x="955.4" y="235.0" width="1.2" height="1.2" fill="#3e3e3e"/><rect x="576.9" y="240.0" width="1.2" height="1.2" fill="#3e3e3e"/><rect x="955.4" y="240.0" width="1.2" height="1.2" fill="#3e3e3e"/><rect x="576.9" y="245.0" width="1.2" height="1.2" fill="#3e3e3e"/><rect x="955.4" y="245.0" width="1.2" height="1.2" fill="#3e3e3e"/><rect x="576.9" y="250.0" width="1.2" height="1.2" fill="#3e3e3e"/><rect x="955.4" y="250.0" width="1.2" height="1.2" fill="#3e3e3e"/><rect x="576.9" y="255.0" width="1.2" height="1.2" fill="#3e3e3e"/><rect x="955.4" y="255.0" width="1.2" height="1.2" fill="#3e3e3e"/><rect x="576.9" y="260.0" width="1.2" height="1.2" fill="#3e3e3e"/><rect x="955.4" y="260.0" width="1.2" height="1.2" fill="#3e3e3e"/><rect x="576.9" y="265.0" width="1.2" height="1.2" fill="#3e3e3e"/><rect x="955.4" y="265.0" width="1.2" height="1.2" fill="#3e3e3e"/><rect x="576.9" y="270.0" width="1.2" height="1.2" fill="#3e3e3e"/><rect x="955.4" y="270.0" width="1.2" height="1.2" fill="#3e3e3e"/><rect x="576.9" y="275.0" width="1.2" height="1.2" fill="#3e3e3e"/><rect x="955.4" y="275.0" width="1.2" height="1.2" fill="#3e3e3e"/><rect x="576.9" y="280.0" width="1.2" height="1.2" fill="#3e3e3e"/><rect x="955.4" y="280.0" width="1.2" height="1.2" fill="#3e3e3e"/><rect x="576.9" y="285.0" width="1.2" height="1.2" fill="#3e3e3e"/><rect x="955.4" y="285.0" width="1.2" height="1.2" fill="#3e3e3e"/><rect x="576.9" y="290.0" width="1.2" height="1.2" fill="#3e3e3e"/><rect x="955.4" y="290.0" width="1.2" height="1.2" fill="#3e3e3e"/><rect x="576.9" y="295.0" width="1.2" height="1.2" fill="#3e3e3e"/><rect x="955.4" y="295.0" width="1.2" height="1.2" fill="#3e3e3e"/><rect x="576.9" y="300.0" width="1.2" height="1.2" fill="#3e3e3e"/><rect x="955.4" y="300.0" width="1.2" height="1.2" fill="#3e3e3e"/><rect x="576.9" y="305.0" width="1.2" height="1.2" fill="#3e3e3e"/><rect x="955.4" y="305.0" width="1.2" height="1.2" fill="#3e3e3e"/><rect x="576.9" y="310.0" width="1.2" height="1.2" fill="#3e3e3e"/><rect x="955.4" y="310.0" width="1.2" height="1.2" fill="#3e3e3e"/><rect x="576.9" y="315.0" width="1.2" height="1.2" fill="#3e3e3e"/><rect x="955.4" y="315.0" width="1.2" height="1.2" fill="#3e3e3e"/><rect x="576.9" y="320.0" width="1.2" height="1.2" fill="#3e3e3e"/><rect x="955.4" y="320.0" width="1.2" height="1.2" fill="#3e3e3e"/><rect x="576.9" y="325.0" width="1.2" height="1.2" fill="#3e3e3e"/><rect x="955.4" y="325.0" width="1.2" height="1.2" fill="#3e3e3e"/><rect x="576.9" y="330.0" width="1.2" height="1.2" fill="#3e3e3e"/><rect x="955.4" y="330.0" width="1.2" height="1.2" fill="#3e3e3e"/><rect x="576.9" y="335.0" width="1.2" height="1.2" fill="#3e3e3e"/><rect x="955.4" y="335.0" width="1.2" height="1.2" fill="#3e3e3e"/><rect x="576.9" y="340.0" width="1.2" height="1.2" fill="#3e3e3e"/><rect x="955.4" y="340.0" width="1.2" height="1.2" fill="#3e3e3e"/><rect x="576.9" y="345.0" width="1.2" height="1.2" fill="#3e3e3e"/><rect x="955.4" y="345.0" width="1.2" height="1.2" fill="#3e3e3e"/><rect x="576.9" y="350.0" width="1.2" height="1.2" fill="#3e3e3e"/><rect x="955.4" y="350.0" width="1.2" height="1.2" fill="#3e3e3e"/><rect x="576.9" y="355.0" width="1.2" height="1.2" fill="#3e3e3e"/><rect x="955.4" y="355.0" width="1.2" height="1.2" fill="#3e3e3e"/><rect x="576.9" y="360.0" width="1.2" height="1.2" fill="#3e3e3e"/><rect x="955.4" y="360.0" width="1.2" height="1.2" fill="#3e3e3e"/><rect x="576.9" y="365.0" width="1.2" height="1.2" fill="#3e3e3e"/><rect x="955.4" y="365.0" width="1.2" height="1.2" fill="#3e3e3e"/><rect x="576.9" y="370.0" width="1.2" height="1.2" fill="#3e3e3e"/><rect x="955.4" y="370.0" width="1.2" height="1.2" fill="#3e3e3e"/><rect x="576.9" y="375.0" width="1.2" height="1.2" fill="#3e3e3e"/><rect x="955.4" y="375.0" width="1.2" height="1.2" fill="#3e3e3e"/><rect x="576.9" y="380.0" width="1.2" height="1.2" fill="#3e3e3e"/><rect x="955.4" y="380.0" width="1.2" height="1.2" fill="#3e3e3e"/><rect x="576.9" y="385.0" width="1.2" height="1.2" fill="#3e3e3e"/><rect x="955.4" y="385.0" width="1.2" height="1.2" fill="#3e3e3e"/><rect x="576.9" y="390.0" width="1.2" height="1.2" fill="#3e3e3e"/><rect x="955.4" y="390.0" width="1.2" height="1.2" fill="#3e3e3e"/><rect x="576.9" y="395.0" width="1.2" height="1.2" fill="#3e3e3e"/><rect x="955.4" y="395.0" width="1.2" height="1.2" fill="#3e3e3e"/><rect x="576.9" y="400.0" width="1.2" height="1.2" fill="#3e3e3e"/><rect x="955.4" y="400.0" width="1.2" height="1.2" fill="#3e3e3e"/><rect x="576.9" y="405.0" width="1.2" height="1.2" fill="#3e3e3e"/><rect x="955.4" y="405.0" width="1.2" height="1.2" fill="#3e3e3e"/><rect x="576.9" y="410.0" width="1.2" height="1.2" fill="#3e3e3e"/><rect x="955.4" y="410.0" width="1.2" height="1.2" fill="#3e3e3e"/><rect x="576.9" y="415.0" width="1.2" height="1.2" fill="#3e3e3e"/><rect x="955.4" y="415.0" width="1.2" height="1.2" fill="#3e3e3e"/>
<rect x="577.5" y="184.3" width="376.5" height="2" fill="#141e2a"/>
<line x1="595.5" y1="200.9" x2="595.5" y2="281.1" stroke="#c0c0c0" stroke-width="0.8"/>
<line x1="595.5" y1="281.1" x2="755.7" y2="281.1" stroke="#c0c0c0" stroke-width="0.8"/>
<text x="594.0" y="202.4" font-size="3.80" fill="#c0c0c0" text-anchor="end" font-weight="bold" >150</text>
<text x="594.0" y="282.6" font-size="3.80" fill="#c0c0c0" text-anchor="end" font-weight="bold" >0</text>
<text transform="translate(584.0,241.0) rotate(-90)" font-size="3.8" font-weight="bold" fill="#b8b8b8" text-anchor="middle" font-family="Liberation Sans, sans-serif">LVP (mmHg)</text>
<line x1="595.5" y1="281.1" x2="595.5" y2="282.3" stroke="#c0c0c0" stroke-width="0.6"/>
<text x="595.5" y="286.1" font-size="3.60" fill="#b8b8b8" text-anchor="middle" font-weight="bold" >-35</text>
<line x1="613.3" y1="281.1" x2="613.3" y2="282.3" stroke="#c0c0c0" stroke-width="0.6"/>
<text x="613.3" y="286.1" font-size="3.60" fill="#b8b8b8" text-anchor="middle" font-weight="bold" >-30</text>
<line x1="631.1" y1="281.1" x2="631.1" y2="282.3" stroke="#c0c0c0" stroke-width="0.6"/>
<text x="631.1" y="286.1" font-size="3.60" fill="#b8b8b8" text-anchor="middle" font-weight="bold" >-25</text>
<line x1="648.9" y1="281.1" x2="648.9" y2="282.3" stroke="#c0c0c0" stroke-width="0.6"/>
<text x="648.9" y="286.1" font-size="3.60" fill="#b8b8b8" text-anchor="middle" font-weight="bold" >-20</text>
<line x1="666.7" y1="281.1" x2="666.7" y2="282.3" stroke="#c0c0c0" stroke-width="0.6"/>
<text x="666.7" y="286.1" font-size="3.60" fill="#b8b8b8" text-anchor="middle" font-weight="bold" >-15</text>
<line x1="684.5" y1="281.1" x2="684.5" y2="282.3" stroke="#c0c0c0" stroke-width="0.6"/>
<text x="684.5" y="286.1" font-size="3.60" fill="#b8b8b8" text-anchor="middle" font-weight="bold" >-10</text>
<line x1="702.3" y1="281.1" x2="702.3" y2="282.3" stroke="#c0c0c0" stroke-width="0.6"/>
<text x="702.3" y="286.1" font-size="3.60" fill="#b8b8b8" text-anchor="middle" font-weight="bold" >-5</text>
<line x1="720.1" y1="281.1" x2="720.1" y2="282.3" stroke="#c0c0c0" stroke-width="0.6"/>
<text x="720.1" y="286.1" font-size="3.60" fill="#b8b8b8" text-anchor="middle" font-weight="bold" >0</text>
<line x1="737.9" y1="281.1" x2="737.9" y2="282.3" stroke="#c0c0c0" stroke-width="0.6"/>
<text x="737.9" y="286.1" font-size="3.60" fill="#b8b8b8" text-anchor="middle" font-weight="bold" >5</text>
<line x1="755.7" y1="281.1" x2="755.7" y2="282.3" stroke="#c0c0c0" stroke-width="0.6"/>
<text x="755.7" y="286.1" font-size="3.60" fill="#b8b8b8" text-anchor="middle" font-weight="bold" >10</text>
<text x="675.6" y="292.1" font-size="3.60" fill="#b8b8b8" text-anchor="middle" font-weight="bold" >Strain(%)</text>
<path d="M658.7,201.1 C660.6,200.8 664.6,200.6 668.3,201.5 C672.0,202.4 685.5,206.7 690.0,208.8 C694.5,210.9 703.8,216.9 706.7,219.6 C709.6,222.3 713.8,228.2 715.1,231.6 C716.4,235.0 717.0,245.0 717.5,248.5 C718.0,252.0 718.7,259.7 719.0,262.0 C719.3,264.3 722.3,267.3 720.0,268.2 C717.7,269.1 702.3,269.3 699.5,270.0 C696.7,270.7 698.9,273.6 696.4,274.2 C693.9,274.8 681.8,275.3 678.0,275.4 C674.2,275.5 666.3,275.7 663.5,275.4 C660.7,275.1 655.7,273.7 653.9,272.5 C652.1,271.3 649.0,267.9 648.0,265.3 C647.0,262.7 645.8,253.7 645.5,250.0 C645.2,246.3 645.2,238.4 645.5,234.0 C645.8,229.6 647.2,215.5 648.0,212.0 C648.8,208.5 650.8,205.3 652.0,204.0 C653.2,202.7 656.8,201.4 658.7,201.1Z" fill="none" stroke="#a80000" stroke-width="1.1"/>
<text x="771.90" y="199.00" font-size="6.70" fill="#c0c0c0" font-weight="normal" textLength="61.95" lengthAdjust="spacingAndGlyphs" >Myocardial work index</text>
<text x="833.19" y="209.20" font-size="5.60" fill="#d4d4d4" font-weight="bold" textLength="23.95" lengthAdjust="spacingAndGlyphs" >ANT_SEPT</text>
<text x="800.56" y="231.00" font-size="5.60" fill="#d4d4d4" font-weight="bold" textLength="12.09" lengthAdjust="spacingAndGlyphs" >SEPT</text>
<text x="879.19" y="231.00" font-size="5.60" fill="#d4d4d4" font-weight="bold" textLength="8.85" lengthAdjust="spacingAndGlyphs" >ANT</text>
<text x="803.09" y="274.50" font-size="5.60" fill="#d4d4d4" font-weight="bold" textLength="7.57" lengthAdjust="spacingAndGlyphs" >INF</text>
<text x="879.01" y="274.50" font-size="5.60" fill="#d4d4d4" font-weight="bold" textLength="8.23" lengthAdjust="spacingAndGlyphs" >LAT</text>
<text x="837.88" y="296.60" font-size="5.60" fill="#d4d4d4" font-weight="bold" textLength="13.38" lengthAdjust="spacingAndGlyphs" >POST</text>
<defs><linearGradient id="gb845" x1="0.5" y1="0" x2="0.45" y2="1"><stop offset="0" stop-color="#50e400"/><stop offset="0.22" stop-color="#a0ee00"/><stop offset="0.6" stop-color="#d0f000"/><stop offset="1" stop-color="#e0f000"/></linearGradient><radialGradient id="gb845r" cx="0.5" cy="0.5" r="0.5"><stop offset="0" stop-color="#e80000"/><stop offset="0.6" stop-color="#f00000"/><stop offset="0.78" stop-color="#ff6000"/><stop offset="0.9" stop-color="#ffa000" stop-opacity="0.7"/><stop offset="1" stop-color="#ffd000" stop-opacity="0"/></radialGradient><radialGradient id="gb845o" cx="0.5" cy="0.5" r="0.5"><stop offset="0" stop-color="#f8b000" stop-opacity="0.9"/><stop offset="1" stop-color="#f8d000" stop-opacity="0"/></radialGradient><linearGradient id="gb845w" x1="0" y1="0" x2="0" y2="1"><stop offset="0" stop-color="#a0f000"/><stop offset="0.45" stop-color="#b8f000" stop-opacity="0.95"/><stop offset="1" stop-color="#d0f000" stop-opacity="0"/></linearGradient></defs><circle cx="845.5" cy="252.3" r="39.3" fill="url(#gb845)"/><clipPath id="gb845c"><circle cx="845.5" cy="252.3" r="39.3"/></clipPath><g clip-path="url(#gb845c)"><ellipse cx="833.5" cy="260.3" rx="20" ry="17" fill="url(#gb845o)"/><ellipse cx="846.0" cy="249.8" rx="20" ry="18" fill="url(#gb845r)"/><path d="M846.5,250.3 L831.5,286.3 L861.5,286.3 Z" fill="url(#gb845w)"/></g><circle cx="845.5" cy="252.3" r="39.3" fill="none" stroke="#f0f000" stroke-width="0.8" opacity="0.8"/><circle cx="845.5" cy="252.3" r="25.5" fill="none" stroke="#f0f060" stroke-width="0.7" opacity="0.9"/><circle cx="845.5" cy="252.3" r="12.6" fill="none" stroke="#f0f060" stroke-width="0.7" opacity="0.9"/><line x1="806.2" y1="252.3" x2="884.8" y2="252.3" stroke="#f0f060" stroke-width="0.7" opacity="0.9"/><line x1="851.8" y1="241.4" x2="865.1" y2="218.3" stroke="#f0f060" stroke-width="0.7" opacity="0.9"/><line x1="839.2" y1="241.4" x2="825.9" y2="218.3" stroke="#f0f060" stroke-width="0.7" opacity="0.9"/><line x1="839.2" y1="263.2" x2="825.9" y2="286.3" stroke="#f0f060" stroke-width="0.7" opacity="0.9"/><line x1="851.8" y1="263.2" x2="865.1" y2="286.3" stroke="#f0f060" stroke-width="0.7" opacity="0.9"/><line x1="845.5" y1="239.7" x2="845.5" y2="264.9" stroke="#f0f060" stroke-width="0.7" opacity="0.9"/><text x="845.5" y="221.2" font-size="5" font-weight="bold" fill="#101010" text-anchor="middle" font-family="Liberation Sans, sans-serif">1978</text><text x="873.8" y="237.3" font-size="5" font-weight="bold" fill="#101010" text-anchor="middle" font-family="Liberation Sans, sans-serif">2087</text><text x="873.8" y="270.3" font-size="5" font-weight="bold" fill="#101010" text-anchor="middle" font-family="Liberation Sans, sans-serif">2213</text><text x="845.5" y="286.6" font-size="5" font-weight="bold" fill="#101010" text-anchor="middle" font-family="Liberation Sans, sans-serif">2238</text><text x="817.2" y="270.3" font-size="5" font-weight="bold" fill="#101010" text-anchor="middle" font-family="Liberation Sans, sans-serif">2642</text><text x="817.2" y="237.3" font-size="5" font-weight="bold" fill="#101010" text-anchor="middle" font-family="Liberation Sans, sans-serif">2181</text><text x="845.5" y="234.4" font-size="5" font-weight="bold" fill="#101010" text-anchor="middle" font-family="Liberation Sans, sans-serif">2800</text><text x="862.4" y="244.5" font-size="5" font-weight="bold" fill="#101010" text-anchor="middle" font-family="Liberation Sans, sans-serif">2529</text><text x="862.7" y="264.5" font-size="5" font-weight="bold" fill="#101010" text-anchor="middle" font-family="Liberation Sans, sans-serif">2274</text><text x="845.5" y="274.1" font-size="5" font-weight="bold" fill="#101010" text-anchor="middle" font-family="Liberation Sans, sans-serif">2446</text><text x="829.3" y="264.5" font-size="5" font-weight="bold" fill="#101010" text-anchor="middle" font-family="Liberation Sans, sans-serif">2699</text><text x="829.3" y="244.5" font-size="5" font-weight="bold" fill="#101010" text-anchor="middle" font-family="Liberation Sans, sans-serif">2564</text><text x="838.9" y="248.1" font-size="5" font-weight="bold" fill="#101010" text-anchor="middle" font-family="Liberation Sans, sans-serif">2988</text><text x="853.3" y="248.1" font-size="5" font-weight="bold" fill="#101010" text-anchor="middle" font-family="Liberation Sans, sans-serif">3164</text><text x="853.8" y="261.8" font-size="5" font-weight="bold" fill="#101010" text-anchor="middle" font-family="Liberation Sans, sans-serif">2432</text><text x="838.9" y="261.8" font-size="5" font-weight="bold" fill="#101010" text-anchor="middle" font-family="Liberation Sans, sans-serif">2874</text><text x="846.1" y="254.9" font-size="5" font-weight="bold" fill="#101010" text-anchor="middle" font-family="Liberation Sans, sans-serif">2979</text>
<defs><linearGradient id="rb577" x1="0" y1="0" x2="0" y2="1"><stop offset="0" stop-color="#ff0000"/><stop offset="0.1" stop-color="#ff2000"/><stop offset="0.3" stop-color="#f0f000"/><stop offset="0.5" stop-color="#00f000"/><stop offset="0.72" stop-color="#00e8f0"/><stop offset="0.9" stop-color="#0040ff"/><stop offset="1" stop-color="#0000ff"/></linearGradient></defs>
<rect x="937.5" y="210.5" width="6.2" height="24.4" fill="url(#rb577)"/>
<text x="933.48" y="209.00" font-size="6.30" fill="#b4b4b4" font-weight="normal" textLength="14.85" lengthAdjust="spacingAndGlyphs" >3500</text>
<text x="932.81" y="240.50" font-size="6.30" fill="#b4b4b4" font-weight="normal" textLength="16.43" lengthAdjust="spacingAndGlyphs" >-1000</text>
<text x="929.00" y="246.75" font-size="6.30" fill="#b4b4b4" font-weight="normal" textLength="23.45" lengthAdjust="spacingAndGlyphs" >mmHg%</text>
<text x="600.58" y="311.80" font-size="9.10" fill="#e8e8e8" font-weight="normal" textLength="20.80" lengthAdjust="spacingAndGlyphs" >GWI</text>
<text x="631.49" y="311.80" font-size="9.10" fill="#e8e8e8" font-weight="normal" textLength="64.37" lengthAdjust="spacingAndGlyphs" >2598 mmHg%</text>
<text x="600.61" y="323.90" font-size="9.10" fill="#e8e8e8" font-weight="normal" textLength="26.14" lengthAdjust="spacingAndGlyphs" >GWW</text>
<text x="630.04" y="323.90" font-size="9.10" fill="#e8e8e8" font-weight="normal" textLength="58.21" lengthAdjust="spacingAndGlyphs" >163 mmHg%</text>
<text x="600.60" y="335.90" font-size="9.10" fill="#e8e8e8" font-weight="normal" textLength="23.94" lengthAdjust="spacingAndGlyphs" >GWE</text>
<text x="630.35" y="335.90" font-size="9.10" fill="#e8e8e8" font-weight="normal" textLength="20.01" lengthAdjust="spacingAndGlyphs" >94%</text>
<text x="724.10" y="321.70" font-size="8.60" fill="#ececec" font-weight="normal" textLength="74.22" lengthAdjust="spacingAndGlyphs" >Atleta, EAA, esforço</text>
<line x1="591.6" y1="317.3" x2="591.6" y2="390.9" stroke="#777777" stroke-width="0.8"/>
<line x1="591.6" y1="390.9" x2="758.6" y2="390.9" stroke="#777777" stroke-width="0.8"/>
<text x="590.1" y="392.2" font-size="3.60" fill="#b0b0b0" text-anchor="end" font-weight="bold" >0</text>
<line x1="590.4" y1="390.9" x2="591.6" y2="390.9" stroke="#909090" stroke-width="0.6"/>
<text x="590.1" y="377.5" font-size="3.60" fill="#b0b0b0" text-anchor="end" font-weight="bold" >1000</text>
<line x1="590.4" y1="376.2" x2="591.6" y2="376.2" stroke="#909090" stroke-width="0.6"/>
<text x="590.1" y="362.8" font-size="3.60" fill="#b0b0b0" text-anchor="end" font-weight="bold" >2000</text>
<line x1="590.4" y1="361.5" x2="591.6" y2="361.5" stroke="#909090" stroke-width="0.6"/>
<text x="590.1" y="348.0" font-size="3.60" fill="#b0b0b0" text-anchor="end" font-weight="bold" >3000</text>
<line x1="590.4" y1="346.7" x2="591.6" y2="346.7" stroke="#909090" stroke-width="0.6"/>
<text x="590.1" y="333.3" font-size="3.60" fill="#b0b0b0" text-anchor="end" font-weight="bold" >4000</text>
<line x1="590.4" y1="332.0" x2="591.6" y2="332.0" stroke="#909090" stroke-width="0.6"/>
<text x="590.1" y="318.6" font-size="3.60" fill="#b0b0b0" text-anchor="end" font-weight="bold" >5000</text>
<line x1="590.4" y1="317.3" x2="591.6" y2="317.3" stroke="#909090" stroke-width="0.6"/>
<rect x="695.8" y="346.8" width="21.0" height="44.1" fill="#00ff00"/>
<rect x="716.7" y="388.0" width="21.4" height="2.9" fill="#0000ff"/>
<text x="701.63" y="396.00" font-size="4.00" fill="#cfcfcf" font-weight="bold" textLength="30.42" lengthAdjust="spacingAndGlyphs" >Global average</text>
<rect x="630.9" y="402.7" width="2.9" height="3.2" fill="#00ff00"/>
<text x="635.14" y="406.00" font-size="4.00" fill="#cfcfcf" font-weight="bold" textLength="35.56" lengthAdjust="spacingAndGlyphs" >Constructive work</text>
<rect x="673.3" y="402.7" width="3.2" height="3.2" fill="#0000ff"/>
<text x="677.80" y="406.00" font-size="4.00" fill="#cfcfcf" font-weight="bold" textLength="24.60" lengthAdjust="spacingAndGlyphs" >Wasted work</text>
<text x="835.9" y="342.3" font-size="6.30" fill="#a4a4a4" text-anchor="start" font-weight="normal" >GLS:</text>
<text x="858.8" y="342.3" font-size="6.30" fill="#a4a4a4" text-anchor="start" font-weight="normal" >-21 %</text>
<text x="835.9" y="351.3" font-size="6.30" fill="#a4a4a4" text-anchor="start" font-weight="normal" >GWI:</text>
<text x="858.49" y="351.30" font-size="6.30" fill="#a4a4a4" font-weight="normal" textLength="39.33" lengthAdjust="spacingAndGlyphs" >2598 mmHg%</text>
<text x="835.9" y="360.3" font-size="6.30" fill="#a4a4a4" text-anchor="start" font-weight="normal" >GCW:</text>
<text x="858.8" y="360.3" font-size="6.30" fill="#a4a4a4" text-anchor="start" font-weight="normal" >2974 mmHg%</text>
<text x="835.9" y="369.3" font-size="6.30" fill="#a4a4a4" text-anchor="start" font-weight="normal" >GWW:</text>
<text x="858.8" y="369.3" font-size="6.30" fill="#a4a4a4" text-anchor="start" font-weight="normal" >163 mmHg%</text>
<text x="835.9" y="378.3" font-size="6.30" fill="#a4a4a4" text-anchor="start" font-weight="normal" >GWE:</text>
<text x="858.8" y="378.3" font-size="6.30" fill="#a4a4a4" text-anchor="start" font-weight="normal" >94 %</text>
<text x="835.9" y="387.3" font-size="6.30" fill="#a4a4a4" text-anchor="start" font-weight="normal" >BP:</text>
<text x="858.33" y="387.30" font-size="6.30" fill="#a4a4a4" font-weight="normal" textLength="39.38" lengthAdjust="spacingAndGlyphs" >150/90 mmHg</text>
</svg></body></html>
